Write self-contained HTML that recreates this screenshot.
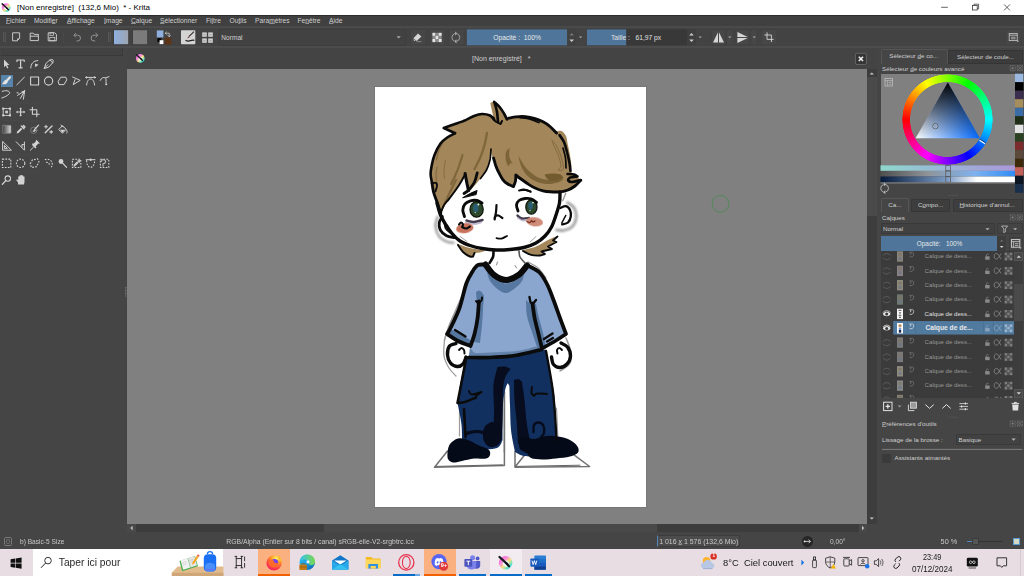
<!DOCTYPE html><html><head><meta charset="utf-8"><title>Krita</title><style>
html,body{margin:0;padding:0;background:#454545;}
body{width:1024px;height:576px;overflow:hidden;position:relative;font-family:"Liberation Sans",sans-serif;}
div,span,svg{position:absolute;box-sizing:border-box;}
span{white-space:pre;line-height:1;}
u{text-decoration:underline;text-decoration-thickness:0.5px;text-underline-offset:0.3px;text-decoration-color:rgba(210,210,210,0.55);}
</style></head><body>
<div style="left:0px;top:0px;width:1024px;height:15.2px;background:#ffffff;"></div>
<span style="left:17px;top:4.3px;font-size:8px;color:#000;">[Non enregistré]  (132,6 Mio)  * - Krita</span>
<svg style="left:0;top:0" width="16" height="16" viewBox="0 0 16 16"><defs><linearGradient id="klt" x1="0" y1="0" x2="1" y2="1"><stop offset="0" stop-color="#ff4fd8"/><stop offset="0.35" stop-color="#f78be0"/><stop offset="0.55" stop-color="#f6e27a"/><stop offset="0.8" stop-color="#48e0d4"/><stop offset="1" stop-color="#38b4ff"/></linearGradient></defs><circle cx="6.2" cy="7.6" r="4.4" fill="url(#klt)"/><circle cx="6.42" cy="8.13" r="1.98" fill="#f2fbfa"/><path d="M2.24 3.86L7.30 8.48" stroke="#1c1c24" stroke-width="1.50" stroke-linecap="round"/><path d="M6.64 7.82L8.40 9.80" stroke="#101018" stroke-width="1.32" stroke-linecap="round"/></svg>
<svg style="left:930px;top:0" width="94" height="16" viewBox="0 0 94 16"><g stroke="#222" stroke-width="0.7" fill="none"><path d="M11.2 7.3h6.6"/><rect x="42.6" y="5.4" width="4.6" height="4.6"/><path d="M44 5.4v-1.2h4.6v4.6h-1.4"/><path d="M74 4.4l6 6M80 4.4l-6 6"/></g></svg>
<div style="left:0px;top:15.2px;width:1024px;height:10.8px;background:#404040;border-top:1px solid #2c2c2c;"></div>
<div style="left:0px;top:26px;width:1024px;height:1.8px;background:#4a4a4a;"></div>
<span style="left:6px;top:18.2px;font-size:6.7px;color:#cfcfcf;"><u>F</u>ichier</span>
<span style="left:34px;top:18.2px;font-size:6.7px;color:#cfcfcf;">Modifi<u>e</u>r</span>
<span style="left:67px;top:18.2px;font-size:6.7px;color:#cfcfcf;"><u>A</u>ffichage</span>
<span style="left:104px;top:18.2px;font-size:6.7px;color:#cfcfcf;"><u>I</u>mage</span>
<span style="left:131px;top:18.2px;font-size:6.7px;color:#cfcfcf;"><u>C</u>alque</span>
<span style="left:160px;top:18.2px;font-size:6.7px;color:#cfcfcf;"><u>S</u>électionner</span>
<span style="left:206px;top:18.2px;font-size:6.7px;color:#cfcfcf;">Fi<u>l</u>tre</span>
<span style="left:229.5px;top:18.2px;font-size:6.7px;color:#cfcfcf;">Ou<u>t</u>ils</span>
<span style="left:255px;top:18.2px;font-size:6.7px;color:#cfcfcf;">Para<u>m</u>ètres</span>
<span style="left:297.5px;top:18.2px;font-size:6.7px;color:#cfcfcf;">Fe<u>n</u>être</span>
<span style="left:329px;top:18.2px;font-size:6.7px;color:#cfcfcf;"><u>A</u>ide</span>
<div style="left:0px;top:27.8px;width:1024px;height:18.4px;background:#434343;"></div>
<div style="left:0px;top:46.2px;width:1024px;height:2.2px;background:#4c4c4c;"></div>
<svg style="left:0;top:0" width="1024" height="576" viewBox="0 0 1024 576"><path d="M3.6 32v10M5.3 32v10" stroke="#606060" stroke-width="0.8"/><path d="M108.6 32v10M110.3 32v10" stroke="#606060" stroke-width="0.8"/><path d="M12.6 32.8h7v5.6l-2.4 2.4h-4.6z" fill="none" stroke="#d6d6d6" stroke-width="0.9"/><path d="M19.6 38.4h-2.4v2.4z" fill="#d6d6d6"/><path d="M30.2 40.6v-7.4h3.2l0.8 1.2h4.2v6.2z" fill="none" stroke="#d6d6d6" stroke-width="0.9"/><path d="M30.2 36.2h8.2" stroke="#d6d6d6" stroke-width="0.9"/><path d="M48.2 32.8h6.6l1.6 1.6v6.4h-8.2z" fill="none" stroke="#d6d6d6" stroke-width="0.9"/><rect x="50" y="32.8" width="3.6" height="2.6" fill="none" stroke="#d6d6d6" stroke-width="0.7"/><rect x="49.8" y="37.4" width="5" height="3.4" fill="none" stroke="#d6d6d6" stroke-width="0.7"/><path d="M63.6 31v12" stroke="#4e4e4e" stroke-width="0.6"/><path d="M74 35.2h3.6a2.9 2.9 0 0 1 0 5.8h-1.2" fill="none" stroke="#9a9a9a" stroke-width="0.9"/><path d="M76 33l-2.2 2.2 2.2 2.2" fill="none" stroke="#9a9a9a" stroke-width="0.9"/><path d="M97.6 35.2h-3.6a2.9 2.9 0 0 0 0 5.8h1.2" fill="none" stroke="#9a9a9a" stroke-width="0.9"/><path d="M95.6 33l2.2 2.2-2.2 2.2" fill="none" stroke="#9a9a9a" stroke-width="0.9"/><defs><linearGradient id="gbtn" x1="0" x2="1"><stop offset="0" stop-color="#8eb0e1"/><stop offset="1" stop-color="#9ea5b1"/></linearGradient></defs><rect x="113.4" y="29.6" width="15.4" height="15.2" fill="#3b3b3b"/><rect x="114" y="30.2" width="14.2" height="14" fill="url(#gbtn)"/><rect x="132.4" y="29.6" width="15.4" height="15.2" fill="#3b3b3b"/><rect x="133" y="30.2" width="14.2" height="14" fill="#7b7b7b"/><rect x="156.8" y="30.4" width="6.6" height="7" fill="#8fb0de"/><rect x="164.8" y="37.8" width="6.6" height="6.6" fill="#5e3418"/><rect x="157.4" y="38.2" width="3.8" height="3.8" fill="#000"/><rect x="159.6" y="40.2" width="3.8" height="3.9" fill="#fff"/><path d="M165.4 33.2h3.8v3.4M166.6 31.8l-1.4 1.4 1.4 1.4M167.8 35.4l1.4 1.4 1.4-1.4" fill="none" stroke="#e0e0e0" stroke-width="0.7"/><rect x="181" y="30.2" width="14.3" height="14" rx="0.8" fill="#d4d4d4"/><path d="M194 31.6l-5.2 5" stroke="#3a2a2a" stroke-width="1.1"/><path d="M188.8 36.4l-1.8 2.2 2.4-1z" fill="#7a1c1c"/><path d="M185.6 40.2c2 1.6 3.4 1 5 0.4 1.4-0.6 2.8-0.6 3.8-0.2" fill="none" stroke="#222" stroke-width="1.2"/><rect x="202.2" y="32.4" width="4.6" height="4.4" fill="#cfcfcf"/><path d="M203.39999999999998 34.8h2.2" stroke="#777" stroke-width="0.6"/><rect x="208.2" y="32.4" width="4.6" height="4.4" fill="#cfcfcf"/><path d="M209.39999999999998 34.8h2.2" stroke="#777" stroke-width="0.6"/><rect x="202.2" y="38.4" width="4.6" height="4.4" fill="#cfcfcf"/><path d="M203.39999999999998 40.8h2.2" stroke="#777" stroke-width="0.6"/><rect x="208.2" y="38.4" width="4.6" height="4.4" fill="#cfcfcf"/><path d="M209.39999999999998 40.8h2.2" stroke="#777" stroke-width="0.6"/><rect x="219.2" y="29.3" width="186.4" height="16" rx="1" fill="#424242" stroke="#3b3b3b" stroke-width="0.6"/><path d="M396.6 36.2h4.2l-2.1 2.2z" fill="#a8a8a8"/><rect x="410.4" y="29.6" width="15.4" height="15.6" rx="1" fill="#474747" stroke="#3f3f3f" stroke-width="0.6"/><rect x="429.6" y="29.6" width="15.4" height="15.6" rx="1" fill="#474747" stroke="#3f3f3f" stroke-width="0.6"/><rect x="448.6" y="29.6" width="15.4" height="15.6" rx="1" fill="#474747" stroke="#3f3f3f" stroke-width="0.6"/><path d="M413.4 38.2l4.6-4.8 3.4 3-4.6 4.6z" fill="#d6d6d6"/><path d="M413.4 38.6l2.4 2.4h-1.8z" fill="#bdbdbd"/><path d="M416.4 41.6h5" stroke="#aaa" stroke-width="0.6"/><rect x="432.4" y="32.8" width="3.1" height="3.1" fill="#e4e4e4"/><rect x="432.4" y="35.9" width="3.1" height="3.1" fill="#8a8a8a"/><rect x="432.4" y="39.0" width="3.1" height="3.1" fill="#e4e4e4"/><rect x="435.5" y="32.8" width="3.1" height="3.1" fill="#8a8a8a"/><rect x="435.5" y="35.9" width="3.1" height="3.1" fill="#e4e4e4"/><rect x="435.5" y="39.0" width="3.1" height="3.1" fill="#8a8a8a"/><rect x="438.6" y="32.8" width="3.1" height="3.1" fill="#e4e4e4"/><rect x="438.6" y="35.9" width="3.1" height="3.1" fill="#8a8a8a"/><rect x="438.6" y="39.0" width="3.1" height="3.1" fill="#e4e4e4"/><path d="M454.47 41.06A3.9 3.9 0 0 1 454.79 33.63M457.13 33.74A3.9 3.9 0 0 1 456.81 41.17" fill="none" stroke="#a9a9a9" stroke-width="0.9"/><path d="M455.06 31.39l2.36 2.15l-2.36 1.93z" fill="#a9a9a9"/><path d="M456.54 43.41l-2.36 -2.15l2.36 -1.93z" fill="#a9a9a9"/><rect x="466.9" y="29.4" width="100.3" height="15.9" fill="#4f769a"/><rect x="567.2" y="29.4" width="9" height="15.9" fill="#414141"/><path d="M569.4 35.4l2.3-2.3 2.3 2.3z" fill="#747474"/><path d="M569.4 39.6l2.3 2.3 2.3-2.3z" fill="#cdcdcd"/><path d="M579 36.6h3.2l-1.6 1.6z" fill="#a8a8a8"/><rect x="587" y="29.4" width="100" height="15.9" fill="#383838"/><rect x="587" y="29.4" width="39.2" height="15.9" fill="#4f769a"/><rect x="687" y="29.4" width="9" height="15.9" fill="#3f3f3f"/><path d="M689.2 35.4l2.3-2.3 2.3 2.3z" fill="#cdcdcd"/><path d="M689.2 39.6l2.3 2.3 2.3-2.3z" fill="#cdcdcd"/><path d="M698.6 36.6h3.2l-1.6 1.6z" fill="#a8a8a8"/><rect x="711.8" y="29.6" width="13.4" height="15.6" rx="1" fill="#474747" stroke="#3f3f3f" stroke-width="0.6"/><rect x="726.6" y="29.6" width="6.4" height="15.6" rx="1" fill="#474747" stroke="#3f3f3f" stroke-width="0.6"/><rect x="736" y="29.6" width="13.4" height="15.6" rx="1" fill="#474747" stroke="#3f3f3f" stroke-width="0.6"/><rect x="751" y="29.6" width="6.4" height="15.6" rx="1" fill="#474747" stroke="#3f3f3f" stroke-width="0.6"/><rect x="761" y="29.6" width="16" height="15.6" rx="1" fill="#474747" stroke="#3f3f3f" stroke-width="0.6"/><path d="M718 32.2v10.4h-5zM719 32.2v10.4h5z" fill="#d6d6d6"/><path d="M737.4 37v-5l10.4 5zM737.4 38v5l10.4-5z" fill="#d6d6d6"/><path d="M728.2 36.6h3.2l-1.6 1.6z" fill="#a8a8a8"/><path d="M752.6 36.6h3.2l-1.6 1.6z" fill="#a8a8a8"/><path d="M767 32.4v7h6.6M764.4 35h7v7" fill="none" stroke="#d6d6d6" stroke-width="0.9"/><rect x="1005.6" y="29.6" width="15" height="15.4" rx="1" fill="#474747" stroke="#3f3f3f" stroke-width="0.6"/><rect x="1009.2" y="33.4" width="8" height="7.2" fill="none" stroke="#c9c9c9" stroke-width="0.8"/><path d="M1009.2 35.2h8" stroke="#c9c9c9" stroke-width="0.8"/><rect x="1011" y="36.6" width="4.6" height="2.8" fill="#8a8a8a"/><path d="M1016.4 40.8h2.6l-1.3 1.2z" fill="#c9c9c9"/></svg>
<span style="left:221.3px;top:34.6px;font-size:6.6px;color:#cfcfcf;">Normal</span>
<span style="left:493.3px;top:34.7px;font-size:6.7px;color:#e8e8e8;">Opacité :  100%</span>
<span style="left:611px;top:34.7px;font-size:6.7px;color:#e0e0e0;">Taille :   61,97 px</span>
<div style="left:0px;top:47.7px;width:127px;height:501px;background:#454545;"></div>
<div style="left:1px;top:48.4px;width:122.4px;height:7.4px;background:#424242;border:1px solid #393939;border-top:none;border-left:none;"></div>
<div style="left:1px;top:74.7px;width:12.2px;height:12.6px;background:#5883ab;"></div>
<svg style="left:0;top:0" width="1024" height="576" viewBox="0 0 1024 576"><path d="M3 72.4h107" stroke="#4c4c4c" stroke-width="0.6"/><path d="M3 103.2h37" stroke="#4c4c4c" stroke-width="0.6"/><path d="M3 120.6h37" stroke="#4c4c4c" stroke-width="0.6"/><path d="M3 137.8h65" stroke="#4c4c4c" stroke-width="0.6"/><path d="M3 155h107" stroke="#4c4c4c" stroke-width="0.6"/><path d="M3 171.8h37" stroke="#4c4c4c" stroke-width="0.6"/><g transform="translate(6.6,64)" fill="none" stroke="#d2d2d2" stroke-width="1" stroke-linecap="round" stroke-linejoin="round"><path d="M-2.6 -4.4v7.6l1.8-1.8 1.4 3 1.2-0.6-1.4-2.8h2.4z" fill="#d2d2d2" stroke="none"/></g><g transform="translate(20.6,64)" fill="none" stroke="#d2d2d2" stroke-width="1" stroke-linecap="round" stroke-linejoin="round"><path d="M-3.6 -2.6v-1.4h7.2v1.4M0 -4v7.6M-1.6 3.8h3.2" stroke-width="1.2"/></g><g transform="translate(34.6,64)" fill="none" stroke="#d2d2d2" stroke-width="1" stroke-linecap="round" stroke-linejoin="round"><path d="M-3.8 4c0-4 2.4-7.4 7-7.4"/><path d="M0.4 -0.6l3.6 1.4-3.4 2.4z" fill="#d2d2d2" stroke="none"/></g><g transform="translate(48.6,64)" fill="none" stroke="#d2d2d2" stroke-width="1" stroke-linecap="round" stroke-linejoin="round"><path d="M-4.2 4.2l1.4-4.6 4-3.6 2.8 2.8-3.6 4zM-4.2 4.2l3.4-3.4M1.2 -4l2.8-0.4 0.6 0.6-0.4 2.8"/></g><g transform="translate(6.6,81)" fill="none" stroke="#d2d2d2" stroke-width="1" stroke-linecap="round" stroke-linejoin="round"><path d="M3.4 -3.8l-3 3.2" stroke-width="2.2" stroke="#e4e4e4"/><path d="M-0.6 -1.2c-2 0.2-2 2.4-4 4.2 2.8 1 5.6-0.4 5.8-2.6z" fill="#e4e4e4" stroke="none"/></g><g transform="translate(20.6,81)" fill="none" stroke="#d2d2d2" stroke-width="1" stroke-linecap="round" stroke-linejoin="round"><path d="M-3.8 3.8l7.6-7.6"/></g><g transform="translate(34.6,81)" fill="none" stroke="#d2d2d2" stroke-width="1" stroke-linecap="round" stroke-linejoin="round"><rect x="-4" y="-4" width="8" height="8" stroke-width="1.1"/></g><g transform="translate(48.6,81)" fill="none" stroke="#d2d2d2" stroke-width="1" stroke-linecap="round" stroke-linejoin="round"><circle r="4.1" stroke-width="1.1"/></g><g transform="translate(62.6,81)" fill="none" stroke="#d2d2d2" stroke-width="1" stroke-linecap="round" stroke-linejoin="round"><path d="M-4.2 0l2.4-3.8h5l1 2.6-2.8 4.8h-4.6z"/></g><g transform="translate(76.6,81)" fill="none" stroke="#d2d2d2" stroke-width="1" stroke-linecap="round" stroke-linejoin="round"><path d="M-4 -4l7.6 3.4-7 4.2 1.8-5"/></g><g transform="translate(90.6,81)" fill="none" stroke="#d2d2d2" stroke-width="1" stroke-linecap="round" stroke-linejoin="round"><path d="M-4 4c0.4-4 2-6 4-6s3.6 2 4 6M-4.2 -3.6h8.4"/><circle cx="-4.2" cy="-3.6" r="0.7" fill="#d2d2d2"/><circle cx="4.2" cy="-3.6" r="0.7" fill="#d2d2d2"/></g><g transform="translate(104.6,81)" fill="none" stroke="#d2d2d2" stroke-width="1" stroke-linecap="round" stroke-linejoin="round"><path d="M-4.4 -0.6c1-2.6 3.4-3.4 5-2.6 1.4 0.8 0.6 3 0.8 5.2M1.2 -3.4l3.2-0.8"/><circle cx="1.6" cy="3.2" r="1" fill="#d2d2d2" stroke="none"/></g><g transform="translate(6.6,94.8)" fill="none" stroke="#d2d2d2" stroke-width="1" stroke-linecap="round" stroke-linejoin="round"><path d="M-4.4 -3.4c3.4-1.4 7-0.6 7.4 1 0.4 2-4 4.4-7.8 5.6"/></g><g transform="translate(20.6,94.8)" fill="none" stroke="#d2d2d2" stroke-width="1" stroke-linecap="round" stroke-linejoin="round"><path d="M4 -4l-7 4.6M4 -4l-4.2 7.6M4 -4l-1.2 8.4M-3.6 -2l1.4 0.2"/><path d="M4.2 -4.2l-3.4 0.8 2.6 2.6z" fill="#d2d2d2" stroke="none"/></g><g transform="translate(6.6,112)" fill="none" stroke="#d2d2d2" stroke-width="1" stroke-linecap="round" stroke-linejoin="round"><rect x="-3.4" y="-3.4" width="6.8" height="6.8" stroke-dasharray="1.4 0.9"/><rect x="-1.3" y="-1.3" width="2.6" height="2.6" fill="#d2d2d2" stroke="none"/><g fill="#d2d2d2" stroke="none"><rect x="-4.4" y="-4.4" width="2" height="2"/><rect x="2.4" y="-4.4" width="2" height="2"/><rect x="-4.4" y="2.4" width="2" height="2"/><rect x="2.4" y="2.4" width="2" height="2"/></g></g><g transform="translate(20.6,112)" fill="none" stroke="#d2d2d2" stroke-width="1" stroke-linecap="round" stroke-linejoin="round"><path d="M0 -3.4v6.8M-3.4 0h6.8" stroke-width="1.2"/><path d="M0 -4.6l1.4 1.6h-2.8zM0 4.6l1.4-1.6h-2.8zM-4.6 0l1.6 1.4v-2.8zM4.6 0l-1.6 1.4v-2.8z" fill="#d2d2d2" stroke="none"/></g><g transform="translate(34.6,112)" fill="none" stroke="#d2d2d2" stroke-width="1" stroke-linecap="round" stroke-linejoin="round"><path d="M-2.2 -4.6v6.8h6.8M-4.6 -2.2h6.8v6.8" stroke-width="1.1"/></g><defs><linearGradient id="tg" x1="0" x2="1"><stop offset="0" stop-color="#3c3c3c"/><stop offset="1" stop-color="#d8d8d8"/></linearGradient></defs><g transform="translate(6.6,129.3)" fill="none" stroke="#d2d2d2" stroke-width="1" stroke-linecap="round" stroke-linejoin="round"><rect x="-4.2" y="-4" width="8.6" height="8" rx="0.8" fill="url(#tg)" stroke="#8a8a8a" stroke-width="0.6"/></g><g transform="translate(20.6,129.3)" fill="none" stroke="#d2d2d2" stroke-width="1" stroke-linecap="round" stroke-linejoin="round"><path d="M-4 4.2l0.6-2 3.8-3.8 1.4 1.4-3.8 3.8z" fill="#d2d2d2" stroke="none"/><path d="M0.6 -3.4l2.8 2.8M1.6 -2.2l1.4-1.6 1.4 1.4-1.6 1.4" stroke-width="1.3"/></g><g transform="translate(34.6,129.3)" fill="none" stroke="#d2d2d2" stroke-width="1" stroke-linecap="round" stroke-linejoin="round"><circle cx="-0.8" cy="1" r="3.2" stroke="#8e8e8e" stroke-width="0.7"/><path d="M4 -4.2l-3.6 3.8" stroke-width="1.3"/><path d="M0.2 -0.2c-1.2 0.2-1 1.6-2.4 2.6 1.8 0.4 3.4-0.2 3.4-1.8z" fill="#d2d2d2" stroke="none"/></g><g transform="translate(48.6,129.3)" fill="none" stroke="#d2d2d2" stroke-width="1" stroke-linecap="round" stroke-linejoin="round"><path d="M-3.4 3.4l6.8-6.8" stroke-width="1.4"/><path d="M-2.6 -4v2.8M-4 -2.6h2.8M2.6 1.2v2.8M1.2 2.6h2.8" stroke-width="1.1"/></g><g transform="translate(62.6,129.3)" fill="none" stroke="#d2d2d2" stroke-width="1" stroke-linecap="round" stroke-linejoin="round"><path d="M-3.6 0l3.4-3.6 3.8 3.6-3.4 3.6z" stroke-width="1"/><path d="M-2.4 0.4h5l-2.8 3z" fill="#d2d2d2" stroke="none"/><path d="M-1.6 -4.4l2 2M3.8 0.6c1 1.4 1 2.4 0.4 3.2" stroke-width="0.9"/></g><g transform="translate(6.6,146)" fill="none" stroke="#d2d2d2" stroke-width="1" stroke-linecap="round" stroke-linejoin="round"><path d="M-4 -4.2v8.4h8.4zM-2.2 -0.2v2.6h2.6z" stroke-width="1"/></g><g transform="translate(20.6,146)" fill="none" stroke="#d2d2d2" stroke-width="1" stroke-linecap="round" stroke-linejoin="round"><path d="M-4.4 -4.2l8.2 8.4v-8.2M1.4 1v-2.6l2.2 0.4" stroke-width="1"/></g><g transform="translate(34.6,146)" fill="none" stroke="#d2d2d2" stroke-width="1" stroke-linecap="round" stroke-linejoin="round"><path d="M-4.2 4.2l3-3" stroke-width="1"/><path d="M-2.4 -0.8l3.2 3.2 1-1-0.6-1.2 2.6-2.6 0.8 0.2 0.6-0.6-3.4-3.4-0.6 0.6 0.2 0.8-2.6 2.6-1.2-0.6z" fill="#d2d2d2" stroke="none"/></g><g transform="translate(6.6,163.3)" fill="none" stroke="#d2d2d2" stroke-width="1" stroke-linecap="round" stroke-linejoin="round"><rect x="-4.2" y="-4.2" width="8.4" height="8.4" stroke-dasharray="1.7 1.3" stroke-linecap="butt" stroke-width="1.1"/></g><g transform="translate(20.6,163.3)" fill="none" stroke="#d2d2d2" stroke-width="1" stroke-linecap="round" stroke-linejoin="round"><circle r="4.2" stroke-dasharray="1.7 1.3" stroke-linecap="butt" stroke-width="1.1"/></g><g transform="translate(34.6,163.3)" fill="none" stroke="#d2d2d2" stroke-width="1" stroke-linecap="round" stroke-linejoin="round"><path d="M-4.4 0.4l2.2-3.8 5.2-1 1.4 2.8-2.6 5-5 0.8z" stroke-dasharray="1.7 1.3" stroke-linecap="butt" stroke-width="1.1"/></g><g transform="translate(48.6,163.3)" fill="none" stroke="#d2d2d2" stroke-width="1" stroke-linecap="round" stroke-linejoin="round"><path d="M-3.8 -3.6c3.4-1.4 7 0.6 7.4 3.6 0.2 1.6-0.2 2.8-1 3.8M-2.6 -1c2-0.4 3.6 0.8 3.4 3.6" stroke-dasharray="1.7 1.3" stroke-linecap="butt" stroke-width="1.1"/></g><g transform="translate(62.6,163.3)" fill="none" stroke="#d2d2d2" stroke-width="1" stroke-linecap="round" stroke-linejoin="round"><circle cx="-1.6" cy="-1.8" r="2.4" fill="#d2d2d2" stroke="none"/><path d="M0 -0.2l4 4.2" stroke-width="1.2"/></g><g transform="translate(76.6,163.3)" fill="none" stroke="#d2d2d2" stroke-width="1" stroke-linecap="round" stroke-linejoin="round"><rect x="-4.2" y="-4" width="8.4" height="8.2" stroke-dasharray="1.7 1.3" stroke-linecap="butt" stroke-width="1.1"/><path d="M-2.6 2.6l0.4-1.4 2.8-2.8 1 1-2.8 2.8zM1.2 -2.6l1.6 1.6M1.8 -2.4l1-1 1 1-1 1" stroke-width="0.9" fill="#d2d2d2"/></g><g transform="translate(90.6,163.3)" fill="none" stroke="#d2d2d2" stroke-width="1" stroke-linecap="round" stroke-linejoin="round"><path d="M-4 -3c0 4 1.4 7 4 7s4-3 4-7" stroke-dasharray="1.7 1.3" stroke-linecap="butt" stroke-width="1.1"/><path d="M-4.4 -3.6h8.8" stroke-width="1"/><circle cx="0" cy="-3.6" r="0.8" fill="#d2d2d2"/></g><g transform="translate(104.6,163.3)" fill="none" stroke="#d2d2d2" stroke-width="1" stroke-linecap="round" stroke-linejoin="round"><rect x="-4.2" y="-4" width="8.4" height="8.2" stroke-dasharray="1.7 1.3" stroke-linecap="butt" stroke-width="1.1"/><path d="M-1.6 3v-2.6c3 0 3.6-3.6 0.8-4-1.4-0.2-2.4 0.6-2.6 1.8" stroke-width="1.1" stroke="#bdbdbd"/></g><g transform="translate(6.6,180)" fill="none" stroke="#d2d2d2" stroke-width="1" stroke-linecap="round" stroke-linejoin="round"><circle cx="1.2" cy="-1.4" r="2.7" stroke-width="1.1"/><path d="M-0.8 0.6l-3.4 3.6" stroke-width="1.3"/></g><g transform="translate(20.6,180)" fill="none" stroke="#d2d2d2" stroke-width="1" stroke-linecap="round" stroke-linejoin="round"><path d="M-2.6 4.4v-2l-1.8-2.4 0.8-0.8 1.2 1v-3.8h1.2v-1h1.3v-0.4h1.3v0.6h1.3v1h1.2v5.4l-0.6 2.4z" fill="#d2d2d2" stroke="none"/></g></svg>
<div style="left:127px;top:47.7px;width:750px;height:21px;background:#444444;"></div>
<span style="left:472px;top:55.4px;font-size:7.0px;color:#cfcfcf;">[Non enregistré]   *</span>
<div style="left:127px;top:68.7px;width:740px;height:455px;background:#808080;"></div>
<div style="left:375.2px;top:87.0px;width:271.2px;height:420.0px;background:#ffffff;box-shadow:0 0 0 0.9px #767676;"></div>
<div style="left:867px;top:68.7px;width:9.5px;height:455px;background:#3d3d3d;"></div>
<div style="left:867px;top:77px;width:9.5px;height:139px;background:#4a4a4a;"></div>
<div style="left:127px;top:523.6px;width:740px;height:8.8px;background:#3c3c3c;"></div>
<div style="left:324px;top:523.6px;width:333px;height:8.8px;background:#494949;"></div>
<div style="left:127px;top:523.6px;width:8.6px;height:8.8px;background:#494949;"></div>
<div style="left:859px;top:523.6px;width:8px;height:8.8px;background:#494949;"></div>
<svg style="left:0;top:0" width="1024" height="576" viewBox="0 0 1024 576"><defs><filter id="bl" x="-20%" y="-20%" width="140%" height="140%"><feGaussianBlur stdDeviation="0.9"/></filter><filter id="bl2" x="-20%" y="-20%" width="140%" height="140%"><feGaussianBlur stdDeviation="0.35"/></filter><clipPath id="pg"><rect x="375.2" y="87" width="271.2" height="420"/></clipPath></defs><g clip-path="url(#pg)"><g filter="url(#bl2)" opacity="0.85"><path d="M447.5 451L434.5 467.300L504.4 465.600L504.4 392" fill="none" stroke="#585858" stroke-width="1.5" stroke-linecap="round" stroke-linejoin="round" /><path d="M515 451.500L515 467.300L589.6 466.500L573 454.200M515 467L527 452" fill="none" stroke="#585858" stroke-width="1.5" stroke-linecap="round" stroke-linejoin="round" /><path d="M436 466.400L503 464.8" fill="none" stroke="#4a4a4a" stroke-width="1.0" stroke-linecap="round" stroke-linejoin="round" /><path d="M516 466.400L580 465.2" fill="none" stroke="#4a4a4a" stroke-width="1.0" stroke-linecap="round" stroke-linejoin="round" /><path d="M437.6 217.0C437.3 218.6 435.3 223.2 435.6 226.5C435.9 229.8 437.3 234.0 439.2 236.5C441.1 239.0 444.4 240.5 446.8 241.6C449.2 242.7 452.4 242.6 453.5 242.8" fill="none" stroke="#7c7c7c" stroke-width="2.6" stroke-linecap="round" stroke-linejoin="round" filter="url(#bl)" opacity="0.85"/><path d="M567.4 202.7C568.3 203.3 571.6 204.9 573.0 206.5C574.4 208.1 575.3 209.8 575.8 212.0C576.3 214.2 576.6 217.0 576.0 219.4C575.4 221.8 574.2 224.9 572.2 226.7C570.2 228.5 566.4 229.9 563.8 230.4C561.2 230.9 557.7 229.9 556.5 229.8" fill="none" stroke="#7c7c7c" stroke-width="2.8" stroke-linecap="round" stroke-linejoin="round" filter="url(#bl)" opacity="0.85"/><path d="M562.7 200.6C563.0 200.0 563.8 198.2 564.3 197.0C564.8 195.8 565.5 193.9 565.8 193.3" fill="none" stroke="#8a8a8a" stroke-width="1.4" stroke-linecap="round" stroke-linejoin="round" /><path d="M462.0 296.0C460.8 298.7 457.2 307.0 455.0 312.0C452.8 317.0 450.8 321.3 449.0 326.0C447.2 330.7 445.2 337.7 444.5 340.0" fill="none" stroke="#8a8a8a" stroke-width="1.6" stroke-linecap="round" stroke-linejoin="round" /><path d="M444.5 340.0C444.4 342.7 443.2 351.3 444.0 356.0C444.8 360.7 447.0 364.7 449.0 368.0C451.0 371.3 454.8 374.7 456.0 376.0" fill="none" stroke="#8a8a8a" stroke-width="1.3" stroke-linecap="round" stroke-linejoin="round" /><path d="M528.0 262.0C529.7 263.0 535.0 265.3 538.0 268.0C541.0 270.7 544.7 276.3 546.0 278.0" fill="none" stroke="#8a8a8a" stroke-width="1.3" stroke-linecap="round" stroke-linejoin="round" /><path d="M566.0 338.0C566.8 340.3 570.4 347.7 571.0 352.0C571.6 356.3 571.3 360.8 569.5 364.0C567.7 367.2 561.6 369.8 560.0 371.0" fill="none" stroke="#8a8a8a" stroke-width="1.5" stroke-linecap="round" stroke-linejoin="round" /><path d="M504.4 388L504.4 452" fill="none" stroke="#5a5a5a" stroke-width="1.4" stroke-linecap="round" stroke-linejoin="round" /><path d="M459.5 408L459.5 436M556.5 408L558 440" fill="none" stroke="#8a8a8a" stroke-width="1.2" stroke-linecap="round" stroke-linejoin="round" /></g><path d="M456.5 243.5C457.4 244.8 459.9 249.3 462.0 251.5C464.1 253.7 467.2 255.7 469.0 256.5C470.8 257.3 472.3 256.5 473.0 256.5L474.5 253.0C475.4 252.9 478.1 252.9 480.0 252.5C481.9 252.1 485.0 251.1 486.0 250.8C483.3 250.3 474.9 249.2 470.0 248.0C465.1 246.8 458.8 244.2 456.5 243.5Z" fill="#a3875a" stroke="none" stroke-width="0" stroke-linecap="round" stroke-linejoin="round" /><path d="M522.0 250.5C523.3 251.2 527.0 253.7 530.0 254.5C533.0 255.3 537.5 255.6 540.0 255.5C542.5 255.4 544.2 254.2 545.0 254.0L541.5 251.5L552.0 249.0L547.5 246.5L556.5 242.0L553.0 240.5L557.5 236.0C555.9 236.7 551.6 238.2 548.0 240.0C544.4 241.8 540.3 244.8 536.0 246.5C531.7 248.2 524.3 249.8 522.0 250.5Z" fill="#a3875a" stroke="none" stroke-width="0" stroke-linecap="round" stroke-linejoin="round" /><path d="M466.5 356.5C470.4 356.7 481.9 357.7 490.0 357.5C498.1 357.3 505.8 356.8 515.0 355.5C524.2 354.2 540.4 350.5 545.5 349.5C546.1 352.6 547.7 361.2 549.0 368.0C550.3 374.8 552.4 383.0 553.5 390.0C554.6 397.0 555.0 402.3 555.5 410.0C556.0 417.7 556.3 431.7 556.5 436.0C555.9 438.0 555.8 444.8 553.0 448.0C550.2 451.2 544.8 454.2 540.0 455.5C535.2 456.8 528.2 456.6 524.0 456.0C519.8 455.4 516.5 452.7 515.0 452.0C514.3 448.3 511.8 437.8 511.0 430.0C510.2 422.2 510.3 412.3 510.0 405.0C509.7 397.7 509.5 389.2 509.4 386.0C509.1 385.6 508.2 382.8 507.5 383.5C506.8 384.2 505.4 388.9 505.0 390.0C504.7 392.5 503.4 396.7 503.0 405.0C502.6 413.3 502.7 434.2 502.6 440.0C501.7 441.3 500.8 446.5 497.0 448.0C493.2 449.5 485.8 449.7 480.0 449.0C474.2 448.3 465.0 444.8 462.0 444.0C461.9 440.8 462.2 431.8 461.5 425.0C460.8 418.2 458.2 406.7 457.5 403.0C458.1 399.2 459.5 387.8 461.0 380.0C462.5 372.2 465.6 360.4 466.5 356.5Z" fill="#12305f" stroke="none" stroke-width="0" stroke-linecap="round" stroke-linejoin="round" /><path d="M497.5 367.0C498.8 366.9 502.8 366.2 505.0 366.5C507.2 366.8 509.6 368.6 510.5 369.0C509.6 370.5 506.2 374.2 505.0 378.0C503.8 381.8 503.4 385.0 503.0 392.0C502.6 399.0 502.8 412.0 502.5 420.0C502.2 428.0 501.7 436.7 501.5 440.0C500.8 440.2 498.3 441.2 497.0 441.0C495.7 440.8 494.1 439.3 493.5 439.0C493.6 434.2 494.0 419.0 494.0 410.0C494.0 401.0 492.9 392.2 493.5 385.0C494.1 377.8 496.8 370.0 497.5 367.0Z" fill="#070d1f" stroke="none" stroke-width="0" stroke-linecap="round" stroke-linejoin="round" /><path d="M514.0 380.0C514.8 379.8 517.2 378.7 518.5 379.0C519.8 379.3 521.4 381.5 522.0 382.0C522.4 385.0 523.7 392.8 524.5 400.0C525.3 407.2 525.9 417.5 527.0 425.0C528.1 432.5 530.3 441.7 531.0 445.0C529.8 445.2 526.2 446.2 524.0 446.0C521.8 445.8 519.0 444.3 518.0 444.0C517.8 440.0 517.1 427.3 516.5 420.0C515.9 412.7 514.9 406.7 514.5 400.0C514.1 393.3 514.1 383.3 514.0 380.0Z" fill="#070d1f" stroke="none" stroke-width="0" stroke-linecap="round" stroke-linejoin="round" /><path d="M447.5 452.0C447.9 450.7 448.2 446.2 450.0 444.0C451.8 441.8 455.0 439.2 458.0 438.5C461.0 437.8 464.7 438.9 468.0 440.0C471.3 441.1 474.6 443.4 478.0 445.0C481.4 446.6 486.5 447.8 488.5 449.5C490.5 451.2 490.4 453.5 490.0 455.0C489.6 456.5 488.7 457.9 486.0 458.5C483.3 459.1 478.0 458.1 474.0 458.5C470.0 458.9 465.5 460.3 462.0 461.0C458.5 461.7 455.3 462.8 453.0 462.5C450.7 462.2 448.9 460.8 448.0 459.0C447.1 457.2 447.6 453.2 447.5 452.0Z" fill="#050a18" stroke="none" stroke-width="0" stroke-linecap="round" stroke-linejoin="round" /><path d="M519.0 441.0C519.8 440.2 521.5 436.8 524.0 436.5C526.5 436.2 530.3 439.1 534.0 439.0C537.7 438.9 542.0 436.4 546.0 436.0C550.0 435.6 554.0 435.8 558.0 436.5C562.0 437.2 566.8 438.3 570.0 440.0C573.2 441.7 576.2 444.4 577.5 446.5C578.8 448.6 579.2 450.8 578.0 452.5C576.8 454.2 573.7 455.5 570.0 456.5C566.3 457.5 560.7 458.0 556.0 458.5C551.3 459.0 546.2 459.6 542.0 459.5C537.8 459.4 533.5 459.0 531.0 458.0C528.5 457.0 528.8 455.0 527.0 453.5C525.2 452.0 521.3 451.1 520.0 449.0C518.7 446.9 519.2 442.3 519.0 441.0Z" fill="#050a18" stroke="none" stroke-width="0" stroke-linecap="round" stroke-linejoin="round" /><path d="M485.0 426.0C486.2 425.3 489.5 422.2 492.0 422.0C494.5 421.8 498.3 423.0 500.0 425.0C501.7 427.0 502.2 430.8 502.0 434.0C501.8 437.2 501.0 441.8 499.0 444.0C497.0 446.2 492.5 447.5 490.0 447.0C487.5 446.5 485.2 443.5 484.0 441.0C482.8 438.5 482.8 434.5 483.0 432.0C483.2 429.5 484.7 427.0 485.0 426.0Z" fill="#060c1c" stroke="none" stroke-width="0" stroke-linecap="round" stroke-linejoin="round" /><path d="M466.0 433.5C468.0 433.2 474.0 431.1 478.0 431.5C482.0 431.9 487.0 433.9 490.0 436.0C493.0 438.1 495.0 442.7 496.0 444.0" fill="none" stroke="#060c1c" stroke-width="3.2" stroke-linecap="round" stroke-linejoin="round" /><path d="M533.5 432.0C533.6 430.8 533.1 426.6 534.0 425.0C534.9 423.4 537.4 422.3 539.0 422.5C540.6 422.7 542.7 424.2 543.5 426.0C544.3 427.8 544.4 431.2 544.0 433.0C543.6 434.8 541.5 436.3 541.0 437.0" fill="none" stroke="#060c1c" stroke-width="2.4" stroke-linecap="round" stroke-linejoin="round" /><path d="M484.0 264.5C483.0 264.6 479.7 264.2 478.0 265.0C476.3 265.8 474.7 268.3 474.0 269.0C472.8 271.3 468.9 276.5 466.5 283.0C464.1 289.5 462.2 300.5 459.5 308.0C456.8 315.5 452.7 323.7 450.5 328.0C448.3 332.3 447.2 333.0 446.5 334.0C448.4 335.2 454.0 339.0 458.0 341.0C462.0 343.0 468.4 345.2 470.5 346.0C470.4 347.0 470.3 350.1 470.0 352.0C469.7 353.9 468.8 356.6 468.5 357.5C472.1 357.5 482.2 357.8 490.0 357.5C497.8 357.2 506.4 356.9 515.0 355.5C523.6 354.1 537.1 350.1 541.5 349.0L543.5 347.0C545.4 346.2 551.2 344.2 555.0 342.0C558.8 339.8 564.2 335.3 566.0 334.0C565.0 331.3 562.1 323.7 560.0 318.0C557.9 312.3 555.6 305.5 553.5 300.0C551.4 294.5 549.8 289.6 547.5 285.0C545.2 280.4 542.8 275.8 539.5 272.5C536.2 269.2 529.5 266.7 527.5 265.5C526.1 267.2 522.6 273.0 519.0 275.5C515.4 278.0 510.2 280.5 506.0 280.5C501.8 280.5 497.2 278.2 493.5 275.5C489.8 272.8 485.6 266.3 484.0 264.5Z" fill="#8ba6ce" stroke="none" stroke-width="0" stroke-linecap="round" stroke-linejoin="round" /><path d="M487.0 272.0C488.2 273.2 490.8 277.1 494.0 279.0C497.2 280.9 502.0 283.5 506.0 283.5C510.0 283.5 514.9 281.1 518.0 279.0C521.1 276.9 523.4 272.3 524.5 271.0C524.1 272.7 523.8 278.0 522.0 281.0C520.2 284.0 516.7 287.0 514.0 289.0C511.3 291.0 508.7 292.9 506.0 293.0C503.3 293.1 500.7 291.5 498.0 289.5C495.3 287.5 491.8 283.9 490.0 281.0C488.2 278.1 487.5 273.5 487.0 272.0Z" fill="#56779f" stroke="none" stroke-width="0" stroke-linecap="round" stroke-linejoin="round" /><path d="M476.0 292.0C476.5 291.8 478.0 290.4 479.0 290.5C480.0 290.6 481.2 291.6 482.0 292.5C482.8 293.4 483.7 295.4 484.0 296.0C483.8 298.3 483.3 305.2 483.0 310.0C482.7 314.8 482.5 319.5 482.0 325.0C481.5 330.5 480.3 340.0 480.0 343.0L474.0 342.0C474.6 338.3 477.0 326.2 477.5 320.0C478.0 313.8 477.2 309.7 477.0 305.0C476.8 300.3 476.2 294.2 476.0 292.0Z" fill="#56779f" stroke="none" stroke-width="0" stroke-linecap="round" stroke-linejoin="round" /><path d="M526.0 300.0C526.7 300.5 528.3 302.3 530.0 303.0C531.7 303.7 535.0 303.8 536.0 304.0C536.5 306.3 537.8 313.2 539.0 318.0C540.2 322.8 541.9 328.5 543.0 333.0C544.1 337.5 545.1 343.0 545.5 345.0L538.0 349.5C537.0 346.6 533.8 337.6 532.0 332.0C530.2 326.4 528.0 321.3 527.0 316.0C526.0 310.7 526.2 302.7 526.0 300.0Z" fill="#56779f" stroke="none" stroke-width="0" stroke-linecap="round" stroke-linejoin="round" /><path d="M446.5 334.0C447.4 333.3 447.8 328.8 452.0 330.0C456.2 331.2 468.7 339.2 472.0 341.0L470.5 346.0C468.4 345.2 462.0 343.0 458.0 341.0C454.0 339.0 448.4 335.2 446.5 334.0Z" fill="#56779f" stroke="none" stroke-width="0" stroke-linecap="round" stroke-linejoin="round" /><path d="M470.0 347.0C470.7 347.9 472.3 351.5 474.0 352.5C475.7 353.5 479.0 352.9 480.0 353.0C483.3 352.8 493.3 352.4 500.0 352.0C506.7 351.6 514.0 351.4 520.0 350.5C526.0 349.6 533.3 347.2 536.0 346.5L541.0 349.0C536.7 350.0 523.5 353.7 515.0 355.0C506.5 356.3 497.8 356.7 490.0 357.0C482.2 357.3 472.1 357.0 468.5 357.0L470.0 347.0Z" fill="#56779f" stroke="none" stroke-width="0" stroke-linecap="round" stroke-linejoin="round" opacity="0.75"/><path d="M485.5 264.5C486.9 266.2 490.6 272.4 494.0 275.0C497.4 277.6 501.9 280.0 506.0 280.0C510.1 280.0 515.0 277.4 518.5 275.0C522.0 272.6 525.6 267.1 527.0 265.5" fill="none" stroke="#0b0b0b" stroke-width="5.98" stroke-linecap="round" stroke-linejoin="round" /><path d="M493.5 251.0C493.4 252.0 493.7 255.0 493.0 257.0C492.3 259.0 490.1 262.0 489.5 263.0" fill="none" stroke="#0b0b0b" stroke-width="2.6" stroke-linecap="round" stroke-linejoin="round" /><path d="M519.0 251.0C519.2 252.0 519.0 255.0 520.0 257.0C521.0 259.0 524.2 262.0 525.0 263.0" fill="none" stroke="#555" stroke-width="1.6" stroke-linecap="round" stroke-linejoin="round" /><path d="M497.5 262l-1 3M515 265.500l1.5 2.5" fill="none" stroke="#777" stroke-width="0.9" stroke-linecap="round" stroke-linejoin="round" /><path d="M456.0 343.5C454.9 343.9 450.9 344.1 449.5 346.0C448.1 347.9 447.3 352.2 447.5 355.0C447.7 357.8 448.9 361.1 450.5 363.0C452.1 364.9 454.9 366.3 457.0 366.5C459.1 366.7 461.5 365.6 463.0 364.0C464.5 362.4 465.5 358.2 466.0 357.0" fill="#fff" stroke="#0b0b0b" stroke-width="3.38" stroke-linecap="round" stroke-linejoin="round" /><path d="M561.0 343.0C562.1 343.7 565.9 344.8 567.5 347.0C569.1 349.2 570.6 353.2 570.5 356.0C570.4 358.8 568.8 362.1 567.0 364.0C565.2 365.9 562.2 367.4 560.0 367.5C557.8 367.6 554.9 366.2 553.5 364.5C552.1 362.8 551.8 358.2 551.5 357.0" fill="#fff" stroke="#0b0b0b" stroke-width="3.38" stroke-linecap="round" stroke-linejoin="round" /><path d="M459.0 350.0C459.4 349.7 460.7 348.0 461.5 348.0C462.3 348.0 463.5 349.1 464.0 350.0C464.5 350.9 464.4 352.9 464.5 353.5" fill="none" stroke="#0b0b0b" stroke-width="1.95" stroke-linecap="round" stroke-linejoin="round" /><path d="M557.5 353.5C557.4 352.9 556.7 350.9 557.0 350.0C557.3 349.1 558.7 348.0 559.5 348.0C560.3 348.0 561.6 349.7 562.0 350.0" fill="none" stroke="#0b0b0b" stroke-width="1.95" stroke-linecap="round" stroke-linejoin="round" /><path d="M484.0 264.5C483.0 264.6 479.7 264.2 478.0 265.0C476.3 265.8 474.7 268.3 474.0 269.0C472.8 271.3 468.9 276.5 466.5 283.0C464.1 289.5 462.2 300.5 459.5 308.0C456.8 315.5 452.6 323.7 450.5 328.0C448.4 332.3 447.6 333.0 447.0 334.0C448.8 335.2 454.1 339.0 458.0 341.0C461.9 343.0 468.4 345.2 470.5 346.0C471.2 344.0 473.3 338.7 474.5 334.0C475.7 329.3 476.9 323.4 477.6 318.0C478.3 312.6 478.7 304.2 478.9 301.5" fill="none" stroke="#0b0b0b" stroke-width="3.77" stroke-linecap="round" stroke-linejoin="round" /><path d="M527.5 265.5C529.5 266.7 536.2 269.2 539.5 272.5C542.8 275.8 545.2 280.4 547.5 285.0C549.8 289.6 551.4 294.5 553.5 300.0C555.6 305.5 557.9 312.3 560.0 318.0C562.1 323.7 565.0 331.3 566.0 334.0C564.3 335.1 560.0 338.1 556.0 340.5C552.0 342.9 544.3 347.2 542.0 348.5C541.4 346.1 539.7 339.1 538.5 334.0C537.3 328.9 535.6 323.1 534.6 318.0C533.6 312.9 532.9 305.9 532.5 303.5" fill="none" stroke="#0b0b0b" stroke-width="3.77" stroke-linecap="round" stroke-linejoin="round" /><path d="M468.5 357.5C472.1 357.5 482.2 357.8 490.0 357.5C497.8 357.2 506.4 356.8 515.0 355.5C523.6 354.2 537.1 350.5 541.5 349.5" fill="none" stroke="#0b0b0b" stroke-width="3.64" stroke-linecap="round" stroke-linejoin="round" /><path d="M476.0 301.0C476.4 301.3 477.6 303.1 478.5 303.0C479.4 302.9 480.9 301.4 481.5 300.5C482.1 299.6 481.9 298.0 482.0 297.5" fill="none" stroke="#0b0b0b" stroke-width="2.08" stroke-linecap="round" stroke-linejoin="round" /><path d="M529.5 297.0C529.7 297.8 529.9 300.9 530.5 302.0C531.1 303.1 532.1 303.8 533.0 303.5C533.9 303.2 535.5 300.6 536.0 300.0" fill="none" stroke="#0b0b0b" stroke-width="2.34" stroke-linecap="round" stroke-linejoin="round" /><path d="M455 330l10.5 6.5" fill="none" stroke="#0b0b0b" stroke-width="2.34" stroke-linecap="round" stroke-linejoin="round" /><path d="M544 339l8.5-5.500M547 341.500l6-3.5" fill="none" stroke="#0b0b0b" stroke-width="2.34" stroke-linecap="round" stroke-linejoin="round" /><path d="M466.0 359.0C465.3 362.5 463.4 372.7 462.0 380.0C460.6 387.3 458.2 399.2 457.5 403.0C458.8 402.8 461.9 402.9 465.0 402.0C468.1 401.1 474.2 398.2 476.0 397.5" fill="none" stroke="#0b0b0b" stroke-width="2.6" stroke-linecap="round" stroke-linejoin="round" /><path d="M546.0 351.0C546.6 354.2 548.3 363.2 549.5 370.0C550.7 376.8 552.1 384.5 553.0 392.0C553.9 399.5 554.4 407.0 555.0 415.0C555.6 423.0 556.2 435.8 556.5 440.0" fill="none" stroke="#0b0b0b" stroke-width="2.34" stroke-linecap="round" stroke-linejoin="round" /><path d="M469.0 391.0C469.4 391.6 469.4 394.3 471.5 394.5C473.6 394.7 479.8 392.4 481.5 392.0L476.0 396.0" fill="none" stroke="#0b0b0b" stroke-width="1.95" stroke-linecap="round" stroke-linejoin="round" /><path d="M532.0 387.0C531.9 388.0 531.2 391.5 531.5 393.0C531.8 394.5 533.6 395.5 534.0 396.0C534.5 395.6 534.8 393.8 537.0 393.5C539.2 393.2 545.3 393.9 547.0 394.0" fill="none" stroke="#0b0b0b" stroke-width="1.95" stroke-linecap="round" stroke-linejoin="round" /><path d="M464 409L465.5 437" fill="none" stroke="#0b0b0b" stroke-width="2.6" stroke-linecap="round" stroke-linejoin="round" /><path d="M493.8 101.3C494.7 102.2 497.4 105.0 499.0 107.0C500.6 109.0 502.0 111.6 503.5 113.5C505.0 115.4 507.2 117.6 507.9 118.4C509.2 118.2 513.1 117.3 516.0 117.0C518.9 116.7 522.3 116.3 525.5 116.6C528.7 116.8 532.1 117.7 535.0 118.5C537.9 119.3 540.3 120.1 543.0 121.5C545.7 122.9 548.8 125.3 551.0 127.0C553.2 128.7 555.6 130.8 556.5 131.5C557.3 131.4 559.9 130.2 561.5 131.0C563.1 131.8 565.0 134.0 566.0 136.0C567.0 138.0 567.2 141.8 567.5 143.0C567.9 145.0 569.4 151.2 570.0 155.0C570.6 158.8 571.3 163.1 571.4 165.8C571.5 168.6 570.6 170.6 570.5 171.5C571.3 172.2 573.8 174.1 575.5 175.5C577.2 176.9 579.9 179.4 580.8 180.2C579.8 181.2 576.8 184.8 574.7 186.4C572.6 188.0 570.4 189.1 568.0 190.0C565.6 190.9 563.6 191.5 560.6 191.8C557.6 192.1 552.9 191.8 550.0 191.6C547.1 191.4 545.5 191.4 543.0 190.8C540.5 190.2 537.3 189.0 535.0 188.0C532.7 187.0 531.3 186.1 529.0 184.6C526.7 183.1 523.2 180.6 521.0 179.0C518.8 177.4 516.7 175.6 515.8 174.9C515.8 175.9 515.9 179.1 515.5 181.0C515.1 182.9 513.8 185.7 513.4 186.6C512.3 186.1 508.8 184.7 507.0 183.5C505.2 182.3 504.1 181.4 502.6 179.3C501.1 177.2 499.2 173.3 498.0 171.0C496.8 168.7 496.5 167.6 495.6 165.3C494.7 163.0 493.3 159.6 492.5 157.0C491.7 154.4 490.9 151.2 490.6 150.0C490.4 151.7 490.3 156.7 489.5 160.0C488.7 163.3 487.4 167.0 486.0 170.0C484.6 173.0 482.7 175.7 481.0 178.0C479.3 180.3 477.8 181.9 476.0 184.0C474.2 186.1 471.4 189.4 470.5 190.5C470.1 189.1 468.9 184.7 468.0 182.0C467.1 179.3 465.6 175.6 465.1 174.3C464.1 176.1 461.6 181.1 459.0 185.2C456.4 189.2 452.3 193.9 449.3 198.6C446.3 203.3 442.2 210.8 440.8 213.2C440.2 211.0 438.2 203.9 437.0 200.0C435.8 196.1 434.3 192.8 433.5 190.0C432.7 187.2 432.2 184.2 432.0 183.0C431.8 181.5 430.6 177.0 430.6 174.0C430.6 171.0 431.2 168.2 431.8 165.0C432.4 161.8 433.1 158.6 434.5 155.0C435.9 151.4 438.2 146.5 440.5 143.5C442.8 140.5 445.6 138.7 448.0 137.0C450.4 135.3 454.0 133.9 455.2 133.3L443.7 128.0C445.6 127.3 451.3 125.3 455.0 124.0C458.7 122.7 462.5 121.4 465.7 120.1C468.9 118.8 471.3 117.0 474.0 116.0C476.7 115.0 479.5 114.1 482.0 114.0C484.5 113.9 487.0 114.6 489.0 115.5C491.0 116.4 493.2 118.8 494.0 119.5C493.7 118.1 492.6 113.8 492.0 111.0C491.4 108.2 490.6 104.3 490.3 103.0L493.8 101.3Z" fill="#a3875a" stroke="none" stroke-width="0" stroke-linecap="round" stroke-linejoin="round" /><path d="M487.0 133.0C486.6 135.0 485.6 141.0 484.5 145.0C483.4 149.0 482.2 153.0 480.5 157.0C478.8 161.0 475.5 167.0 474.5 169.0" fill="none" stroke="#7c6438" stroke-width="2.4" stroke-linecap="round" stroke-linejoin="round" opacity="0.9"/><path d="M462.5 155.0C461.9 156.8 460.2 162.5 459.0 166.0C457.8 169.5 456.3 173.0 455.0 176.0C453.7 179.0 451.7 182.7 451.0 184.0" fill="none" stroke="#7c6438" stroke-width="2.2" stroke-linecap="round" stroke-linejoin="round" opacity="0.9"/><path d="M444.0 141.0C443.2 142.5 440.2 146.8 439.0 150.0C437.8 153.2 436.9 158.3 436.5 160.0" fill="none" stroke="#7c6438" stroke-width="1.2" stroke-linecap="round" stroke-linejoin="round" opacity="0.8"/><path d="M445.5 160.0C445.2 161.7 444.2 167.0 444.0 170.0C443.8 173.0 444.4 176.7 444.5 178.0" fill="none" stroke="#7c6438" stroke-width="1" stroke-linecap="round" stroke-linejoin="round" opacity="0.8"/><path d="M437.0 167.0C436.8 168.5 435.9 173.0 436.0 176.0C436.1 179.0 437.2 183.5 437.5 185.0" fill="none" stroke="#7c6438" stroke-width="1.2" stroke-linecap="round" stroke-linejoin="round" opacity="0.8"/><path d="M456.0 180.0C455.0 182.0 451.8 188.2 450.0 192.0C448.2 195.8 445.8 201.2 445.0 203.0" fill="none" stroke="#7c6438" stroke-width="2.2" stroke-linecap="round" stroke-linejoin="round" opacity="0.9"/><path d="M509.6 148.0C509.0 148.7 506.6 150.0 506.0 152.0C505.4 154.0 505.4 157.6 505.8 160.0C506.2 162.4 507.8 165.4 508.2 166.5C508.7 165.9 510.2 163.3 511.0 163.0C511.8 162.7 512.7 164.2 513.0 164.5C512.4 163.2 510.1 159.8 509.5 157.0C508.9 154.2 509.6 149.5 509.6 148.0Z" fill="#7c6438" stroke="none" stroke-width="0" stroke-linecap="round" stroke-linejoin="round" /><path d="M518.4 155.3C518.8 157.1 519.6 162.6 521.0 166.0C522.4 169.4 524.5 172.9 527.0 175.5C529.5 178.1 532.7 180.1 536.0 181.5C539.3 182.9 543.3 183.8 547.0 184.0C550.7 184.2 555.2 183.3 558.0 182.5C560.8 181.7 562.6 179.6 563.5 179.0C562.2 179.1 558.4 179.3 556.0 179.5C553.6 179.7 550.2 179.9 549.0 180.0C547.2 179.6 541.5 179.2 538.0 177.5C534.5 175.8 530.7 172.6 528.0 170.0C525.3 167.4 523.6 164.4 522.0 162.0C520.4 159.6 519.0 156.4 518.4 155.3Z" fill="#7c6438" stroke="none" stroke-width="0" stroke-linecap="round" stroke-linejoin="round" /><path d="M544.5 174.5C545.8 174.3 549.3 173.5 552.0 173.5C554.7 173.5 558.6 173.8 560.5 174.5C562.4 175.2 563.0 177.4 563.5 178.0C562.2 178.5 558.6 180.8 556.0 181.0C553.4 181.2 549.9 180.6 548.0 179.5C546.1 178.4 545.1 175.3 544.5 174.5Z" fill="#735b30" stroke="none" stroke-width="0" stroke-linecap="round" stroke-linejoin="round" /><path d="M552.0 140.5C552.7 141.2 554.6 142.6 556.0 145.0C557.4 147.4 559.2 151.5 560.5 155.0C561.8 158.5 563.2 163.4 563.5 166.0C563.8 168.6 562.9 169.8 562.0 170.5C561.1 171.2 558.7 170.1 558.0 170.0C558.5 169.3 560.9 168.3 561.0 166.0C561.1 163.7 559.7 159.3 558.5 156.0C557.3 152.7 555.1 148.6 554.0 146.0C552.9 143.4 552.3 141.4 552.0 140.5" fill="none" stroke="#7c6438" stroke-width="0.8" stroke-linecap="round" stroke-linejoin="round" /><path d="M494.0 119.5C493.3 118.8 492.0 116.4 490.0 115.5C488.0 114.6 484.7 113.9 482.0 114.0C479.3 114.1 476.7 115.0 474.0 116.0C471.3 117.0 468.9 118.8 465.7 120.1C462.5 121.4 458.7 122.7 455.0 124.0C451.3 125.3 445.6 127.3 443.7 128.0L455.2 133.3C454.0 133.9 450.4 135.3 448.0 137.0C445.6 138.7 442.8 140.5 440.5 143.5C438.2 146.5 435.9 151.4 434.5 155.0C433.1 158.6 432.4 161.8 431.8 165.0C431.2 168.2 430.6 171.0 430.6 174.0C430.6 177.0 431.8 181.5 432.0 183.0" fill="none" stroke="#0b0b0b" stroke-width="2.6" stroke-linecap="round" stroke-linejoin="round" /><path d="M432.3 184.0C432.8 183.8 434.4 182.3 435.2 182.6C436.0 182.8 437.0 184.0 437.0 185.5C437.0 187.0 435.7 190.5 435.4 191.5" fill="none" stroke="#0b0b0b" stroke-width="1.82" stroke-linecap="round" stroke-linejoin="round" /><path d="M432.0 183.0C432.2 184.5 432.7 188.8 433.5 192.0C434.3 195.2 435.8 198.5 437.0 202.0C438.2 205.5 440.2 211.3 440.8 213.2" fill="none" stroke="#0b0b0b" stroke-width="2.86" stroke-linecap="round" stroke-linejoin="round" /><path d="M440.8 213.2C441.3 211.8 442.6 207.4 444.0 205.0C445.4 202.6 446.8 201.9 449.3 198.6C451.8 195.3 456.4 189.2 459.0 185.2C461.6 181.1 464.1 176.1 465.1 174.3" fill="none" stroke="#0b0b0b" stroke-width="1.95" stroke-linecap="round" stroke-linejoin="round" /><path d="M465.1 173.5C465.3 174.8 465.9 178.2 466.5 181.0C467.1 183.8 468.2 188.9 468.5 190.5" fill="none" stroke="#0b0b0b" stroke-width="3.12" stroke-linecap="round" stroke-linejoin="round" /><path d="M477.2 173.0C476.8 174.5 475.9 179.1 474.5 182.0C473.1 184.9 469.5 189.1 468.5 190.5L464.0 193.5" fill="none" stroke="#0b0b0b" stroke-width="2.86" stroke-linecap="round" stroke-linejoin="round" /><path d="M491.0 149.0C490.8 150.8 490.8 156.5 490.0 160.0C489.2 163.5 488.1 166.9 486.5 170.0C484.9 173.1 481.5 177.1 480.5 178.5" fill="none" stroke="#0b0b0b" stroke-width="1.69" stroke-linecap="round" stroke-linejoin="round" /><path d="M498.0 122.0C497.8 120.3 497.6 115.4 497.0 112.0C496.4 108.6 494.7 103.5 494.2 101.8C495.2 102.8 498.4 105.5 500.0 107.5C501.6 109.5 502.8 111.5 504.0 113.5C505.2 115.5 506.5 118.5 507.0 119.5" fill="none" stroke="#0b0b0b" stroke-width="2.6" stroke-linecap="round" stroke-linejoin="round" /><path d="M493.5 117.5C493.8 118.1 493.8 119.9 495.0 121.0C496.2 122.1 499.6 123.5 500.5 124.0L502.0 121.0" fill="none" stroke="#0b0b0b" stroke-width="2.08" stroke-linecap="round" stroke-linejoin="round" /><path d="M508.5 118.2C509.8 118.0 513.2 117.1 516.0 116.8C518.8 116.5 522.3 116.3 525.5 116.6C528.7 116.9 532.1 117.7 535.0 118.6C537.9 119.5 540.5 120.5 543.0 121.8C545.5 123.1 547.8 124.6 550.0 126.5C552.2 128.4 555.4 131.9 556.5 133.0" fill="none" stroke="#0b0b0b" stroke-width="2.86" stroke-linecap="round" stroke-linejoin="round" /><path d="M520.0 117.5C521.7 117.8 526.8 118.2 530.0 119.0C533.2 119.8 537.5 121.9 539.0 122.5" fill="none" stroke="#0b0b0b" stroke-width="1.82" stroke-linecap="round" stroke-linejoin="round" /><path d="M559.5 135.0C560.2 136.2 562.8 139.2 564.0 142.0C565.2 144.8 566.1 148.5 567.0 152.0C567.9 155.5 568.9 159.8 569.5 163.0C570.1 166.2 570.3 169.7 570.5 171.0" fill="none" stroke="#0b0b0b" stroke-width="2.6" stroke-linecap="round" stroke-linejoin="round" /><path d="M563.0 148.0C563.4 149.7 565.0 154.7 565.5 158.0C566.0 161.3 565.9 166.3 566.0 168.0" fill="none" stroke="#0b0b0b" stroke-width="1.69" stroke-linecap="round" stroke-linejoin="round" /><path d="M567.5 174.0C568.6 174.1 572.3 174.1 574.0 174.5C575.7 174.9 576.9 176.2 577.5 176.5L570.0 177.5C569.7 177.9 567.7 179.2 568.0 180.0C568.3 180.8 569.9 182.0 572.0 182.0C574.1 182.0 579.1 180.3 580.5 180.0" fill="none" stroke="#0b0b0b" stroke-width="2.6" stroke-linecap="round" stroke-linejoin="round" /><path d="M580.8 180.2C579.8 181.2 577.1 184.4 575.0 186.0C572.9 187.6 570.4 189.0 568.0 190.0C565.6 191.0 563.6 191.5 560.6 191.8C557.6 192.1 552.9 192.0 550.0 191.8C547.1 191.6 545.5 191.4 543.0 190.8C540.5 190.2 537.3 189.0 535.0 188.0C532.7 187.0 531.3 186.1 529.0 184.6C526.7 183.1 523.2 180.6 521.0 179.0C518.8 177.4 516.7 175.6 515.8 174.9C515.8 175.9 515.9 179.1 515.5 181.0C515.1 182.9 513.8 185.7 513.4 186.6C512.3 186.1 508.8 184.7 507.0 183.5C505.2 182.3 504.1 181.4 502.6 179.3C501.1 177.2 499.2 173.3 498.0 171.0C496.8 168.7 496.4 167.5 495.6 165.3C494.9 163.1 493.9 159.2 493.5 158.0" fill="none" stroke="#0b0b0b" stroke-width="2.86" stroke-linecap="round" stroke-linejoin="round" /><path d="M519.0 190.5C519.8 190.3 522.1 189.3 524.0 189.5C525.9 189.7 529.4 191.2 530.5 191.5" fill="none" stroke="#0b0b0b" stroke-width="1.82" stroke-linecap="round" stroke-linejoin="round" /><path d="M437.0 203.0C437.6 205.0 439.0 211.3 440.5 215.0C442.0 218.7 444.1 221.9 446.0 225.0C447.9 228.1 449.7 230.8 452.0 233.5C454.3 236.2 457.0 239.0 460.0 241.0C463.0 243.0 466.3 244.2 470.0 245.5C473.7 246.8 477.7 247.8 482.0 248.5C486.3 249.2 491.3 249.8 496.0 250.0C500.7 250.2 505.3 249.9 510.0 249.5C514.7 249.1 519.7 248.6 524.0 247.5C528.3 246.4 532.5 244.9 536.0 243.0C539.5 241.1 542.4 238.7 545.0 236.0C547.6 233.3 549.7 230.5 551.5 227.0C553.3 223.5 554.7 219.0 556.0 215.0C557.3 211.0 558.8 206.8 559.5 203.0C560.2 199.2 559.9 193.8 560.0 192.0" fill="none" stroke="#0b0b0b" stroke-width="3.38" stroke-linecap="round" stroke-linejoin="round" /><path d="M442.4 216.5C441.9 217.5 439.6 220.2 439.3 222.5C439.0 224.8 439.1 227.8 440.3 230.0C441.5 232.2 444.1 234.5 446.5 235.8C448.9 237.1 453.1 237.3 454.4 237.6" fill="none" stroke="#0b0b0b" stroke-width="2.73" stroke-linecap="round" stroke-linejoin="round" /><path d="M444.3 221.0C444.5 222.2 444.4 226.4 445.5 228.5C446.6 230.6 450.1 232.7 451.0 233.5" fill="none" stroke="#0b0b0b" stroke-width="1.56" stroke-linecap="round" stroke-linejoin="round" /><path d="M560.4 208.0C561.3 207.7 564.2 205.9 565.8 206.2C567.4 206.5 569.2 208.3 570.0 210.0C570.8 211.7 571.1 214.2 570.8 216.3C570.5 218.4 569.4 221.2 568.0 222.5C566.6 223.8 563.2 224.0 562.2 224.3" fill="none" stroke="#0b0b0b" stroke-width="2.34" stroke-linecap="round" stroke-linejoin="round" /><path d="M565.8 215.4C565.4 216.1 564.3 218.3 563.6 219.6C562.9 220.9 562.0 222.4 561.7 223.0" fill="none" stroke="#0b0b0b" stroke-width="1.43" stroke-linecap="round" stroke-linejoin="round" /><path d="M458.0 245.0C458.8 246.2 461.0 250.1 463.0 252.0C465.0 253.9 468.3 255.8 470.0 256.5C471.7 257.2 472.5 256.5 473.0 256.5L474.5 253.0" fill="none" stroke="#0b0b0b" stroke-width="1.95" stroke-linecap="round" stroke-linejoin="round" /><path d="M523.0 251.0C524.3 251.6 528.2 254.1 531.0 254.8C533.8 255.6 537.7 255.6 540.0 255.5C542.3 255.4 544.2 254.2 545.0 254.0L541.5 251.5L552.0 249.0L548.0 246.5L556.5 242.0L553.0 240.5L557.5 236.5" fill="none" stroke="#0b0b0b" stroke-width="1.82" stroke-linecap="round" stroke-linejoin="round" /><ellipse cx="476.6" cy="209.4" rx="6.6" ry="7.8" fill="#2c4729"/><ellipse cx="475.8" cy="208" rx="2.8" ry="4.2" fill="#2b6485" opacity="0.8" filter="url(#bl2)"/><ellipse cx="476.6" cy="209.4" rx="6.6" ry="7.8" fill="none" stroke="#10180f" stroke-width="1.3"/><circle cx="478.4" cy="204.6" r="1" fill="#dfeee0"/><circle cx="475.2" cy="212.6" r="0.7" fill="#cfe0d8"/><ellipse cx="531.4" cy="207" rx="5.6" ry="7.2" fill="#2c4729"/><ellipse cx="530.6" cy="205.8" rx="2.4" ry="3.8" fill="#2b6485" opacity="0.8" filter="url(#bl2)"/><ellipse cx="531.4" cy="207" rx="5.6" ry="7.2" fill="none" stroke="#10180f" stroke-width="1.3"/><circle cx="533" cy="202.6" r="0.9" fill="#dfeee0"/><circle cx="530" cy="210.4" r="0.7" fill="#cfe0d8"/><path d="M464.5 216.5C464.2 215.4 462.7 212.1 462.8 210.0C462.9 207.9 463.7 205.5 465.0 204.0C466.3 202.5 468.5 201.4 470.5 200.8C472.5 200.2 475.1 200.1 477.0 200.5C478.9 200.9 481.2 202.6 482.0 203.0" fill="none" stroke="#0b0b0b" stroke-width="2.86" stroke-linecap="round" stroke-linejoin="round" /><path d="M518.0 211.0C517.8 210.0 516.3 206.8 516.5 205.0C516.7 203.2 517.6 201.6 519.0 200.5C520.4 199.4 522.9 198.8 525.0 198.5C527.1 198.2 529.6 198.3 531.5 199.0C533.4 199.7 535.7 201.9 536.5 202.5" fill="none" stroke="#0b0b0b" stroke-width="2.86" stroke-linecap="round" stroke-linejoin="round" /><path d="M466.5 220.5C467.8 220.8 471.3 222.1 474.0 222.0C476.7 221.9 481.1 220.3 482.5 220.0" fill="none" stroke="#30263a" stroke-width="2.4" stroke-linecap="round" stroke-linejoin="round" opacity="0.9"/><path d="M466.0 222.5C467.3 222.8 471.5 224.0 474.0 224.0C476.5 224.0 479.8 222.8 481.0 222.5" fill="none" stroke="#8f86a8" stroke-width="1.8" stroke-linecap="round" stroke-linejoin="round" opacity="0.55"/><path d="M517.5 215.5C518.2 216.0 520.1 218.1 522.0 218.5C523.9 218.9 527.8 218.1 529.0 218.0" fill="none" stroke="#30263a" stroke-width="2.4" stroke-linecap="round" stroke-linejoin="round" opacity="0.9"/><path d="M518.0 218.0C518.8 218.4 521.2 220.2 523.0 220.5C524.8 220.8 528.0 220.1 529.0 220.0" fill="none" stroke="#8f86a8" stroke-width="1.8" stroke-linecap="round" stroke-linejoin="round" opacity="0.55"/><ellipse cx="464.8" cy="228.2" rx="8.6" ry="5" fill="#c7735c" filter="url(#bl2)" transform="rotate(-8 464.8 228.2)"/><ellipse cx="534.6" cy="221.8" rx="8.4" ry="4.6" fill="#d08c7a" filter="url(#bl2)" transform="rotate(8 534.6 221.8)"/><path d="M459.0 224.5C459.3 224.2 460.3 222.5 461.0 222.5C461.7 222.5 462.8 223.8 463.0 224.5C463.2 225.2 462.2 226.6 462.0 227.0C462.7 227.2 464.7 228.6 466.0 228.5C467.3 228.4 469.3 226.8 470.0 226.5" fill="none" stroke="#0b0b0b" stroke-width="2.08" stroke-linecap="round" stroke-linejoin="round" /><path d="M527.0 221.5C527.5 221.7 529.2 222.7 530.0 222.5C530.8 222.3 531.2 220.8 531.5 220.5C531.8 220.8 532.4 221.9 533.0 222.0C533.6 222.1 534.7 221.2 535.0 221.0" fill="none" stroke="#7a3424" stroke-width="1.3" stroke-linecap="round" stroke-linejoin="round" /><path d="M462.8 197.8C464.0 197.1 467.6 194.8 470.0 193.6C472.4 192.4 475.8 191.1 477.0 190.6L476.0 194.5C474.8 194.8 471.2 195.6 469.0 196.2C466.8 196.8 463.8 197.5 462.8 197.8Z" fill="#0b0b0b" stroke="#0b0b0b" stroke-width="1.04" stroke-linecap="round" stroke-linejoin="round" /><path d="M521.0 190.2C521.8 190.2 524.4 189.7 526.0 190.0C527.6 190.3 529.9 191.5 530.7 191.8" fill="none" stroke="#0b0b0b" stroke-width="1.95" stroke-linecap="round" stroke-linejoin="round" /><path d="M496.5 205.0C496.4 206.2 496.3 209.6 496.0 212.0C495.7 214.4 494.8 218.2 494.6 219.5C494.7 219.0 494.4 217.2 495.0 216.5C495.6 215.8 497.3 215.2 498.5 215.5C499.7 215.8 501.8 217.6 502.4 218.0" fill="none" stroke="#0b0b0b" stroke-width="2.21" stroke-linecap="round" stroke-linejoin="round" /><path d="M496.5 238.2C497.3 238.3 499.8 239.0 501.5 238.6C503.2 238.2 506.1 236.4 507.0 236.0" fill="none" stroke="#0b0b0b" stroke-width="1.82" stroke-linecap="round" stroke-linejoin="round" /><path d="M460 236.500l7 5M536 236.500l-6 5.5" fill="none" stroke="#999" stroke-width="0.9" stroke-linecap="round" stroke-linejoin="round" /></g></svg>
<svg style="left:0;top:0" width="1024" height="576" viewBox="0 0 1024 576"><defs><linearGradient id="kl" x1="0" y1="0" x2="1" y2="1"><stop offset="0" stop-color="#ff4fd8"/><stop offset="0.35" stop-color="#f78be0"/><stop offset="0.55" stop-color="#f6e27a"/><stop offset="0.8" stop-color="#48e0d4"/><stop offset="1" stop-color="#38b4ff"/></linearGradient></defs><circle cx="140.3" cy="58.4" r="4.3" fill="url(#kl)"/><circle cx="140.52" cy="58.92" r="1.94" fill="#f2fbfa"/><path d="M136.43 54.74L141.38 59.26" stroke="#1c1c24" stroke-width="1.46" stroke-linecap="round"/><path d="M140.73 58.62L142.45 60.55" stroke="#101018" stroke-width="1.29" stroke-linecap="round"/><rect x="855.4" y="53.3" width="11" height="11.2" rx="1.6" fill="#353535" stroke="#767676" stroke-width="0.7"/><path d="M858.8 56.8l4.2 4.2M863 56.8l-4.2 4.2" stroke="#f4f4f4" stroke-width="1.5"/><circle cx="720.5" cy="203.8" r="8.4" fill="none" stroke="#528a58" stroke-width="1"/><path d="M869.6 74.6l2.2-2.2 2.2 2.2z" fill="#c8c8c8"/><path d="M869.6 517.4l2.2 2.2 2.2-2.2z" fill="#c8c8c8"/><path d="M132.6 525.8l-2.2 2.2 2.2 2.2z" fill="#c8c8c8"/><path d="M862 525.8l2.2 2.2-2.2 2.2z" fill="#c8c8c8"/><path d="M125.8 287v9.4" stroke="#777" stroke-width="1.2" stroke-dasharray="1 0.5"/><path d="M878.6 287v9.4" stroke="#777" stroke-width="1.2" stroke-dasharray="1 0.5"/></svg>
<div style="left:877px;top:47.7px;width:147px;height:501px;background:#454545;"></div>
<div style="left:880.5px;top:74px;width:134px;height:91px;background:#808080;"></div>
<div style="left:948px;top:50px;width:75px;height:13.6px;background:#3c3c3c;border:0.6px solid #353535;"></div>
<div style="left:880.5px;top:48.6px;width:67.4px;height:15px;background:#454545;border:0.6px solid #555;border-bottom:none;border-radius:1.5px 1.5px 0 0;"></div>
<span style="left:889.3px;top:53.0px;font-size:6.25px;color:#cfcfcf;">Sélecteur <u>d</u>e co...</span>
<span style="left:957px;top:53.5px;font-size:6.25px;color:#cfcfcf;">S<u>é</u>lecteur de coule...</span>
<span style="left:882px;top:65.6px;font-size:6.25px;color:#cfcfcf;">Sélecteur <u>d</u>e couleurs avancé</span>
<div style="left:902.0px;top:73.8px;width:91.4px;height:91.4px;border-radius:50%;background:conic-gradient(from 270deg,#ff0000,#ffff00,#00ff00,#00ffff,#0000ff,#ff00ff,#ff0000);-webkit-mask:radial-gradient(circle closest-side,transparent 0,transparent 81.5%,#000 83%,#000 98.5%,transparent 100%);mask:radial-gradient(circle closest-side,transparent 0,transparent 81.5%,#000 83%,#000 98.5%,transparent 100%);"></div>
<svg style="left:0;top:0" width="1024" height="576" viewBox="0 0 1024 576"><defs><linearGradient id="trA" gradientUnits="userSpaceOnUse" x1="915.6" y1="138.3" x2="979.9" y2="138.3"><stop offset="0" stop-color="#ffffff"/><stop offset="1" stop-color="#0068ff"/></linearGradient><linearGradient id="trB" gradientUnits="userSpaceOnUse" x1="947.8" y1="82.3" x2="947.8" y2="138.3"><stop offset="0" stop-color="#000" stop-opacity="1"/><stop offset="1" stop-color="#000" stop-opacity="0"/></linearGradient><linearGradient id="b1" x1="0" x2="1"><stop offset="0" stop-color="#8fd8cc"/><stop offset="0.5" stop-color="#9bb4d8"/><stop offset="1" stop-color="#ab98d8"/></linearGradient><linearGradient id="b2" x1="0" x2="1"><stop offset="0" stop-color="#4e4e4e"/><stop offset="0.35" stop-color="#8f9499"/><stop offset="0.7" stop-color="#7fb2ee"/><stop offset="1" stop-color="#2f8cf5"/></linearGradient><linearGradient id="b3" x1="0" x2="1"><stop offset="0" stop-color="#061a3a"/><stop offset="0.5" stop-color="#7d9dc6"/><stop offset="0.72" stop-color="#ffffff"/><stop offset="1" stop-color="#ffffff"/></linearGradient></defs><path d="M947.8 82.3L979.9 138.3H915.6z" fill="url(#trA)"/><path d="M947.8 82.3L979.9 138.3H915.6z" fill="url(#trB)"/><circle cx="935.4" cy="126.2" r="2.6" fill="none" stroke="#3a3a3a" stroke-width="0.7"/><circle cx="935.4" cy="126.2" r="2.0" fill="none" stroke="#c8c8c8" stroke-width="0.5"/><path d="M979.6 140.2l5.4 3.6" stroke="#fff" stroke-width="1.2"/><path d="M980.2 139.2l5.4 3.6" stroke="#222" stroke-width="0.6"/><rect x="885" y="78.4" width="7.6" height="7.6" fill="none" stroke="#c4c4c4" stroke-width="0.7"/><path d="M885 80.6h7.6M887.4 80.6v5.4M888.8 82.4h2.6M888.8 84.2h2.6" stroke="#c4c4c4" stroke-width="0.6"/><rect x="1015" y="73.70" width="8.4" height="8.6" fill="#9ab8e0"/><rect x="1015" y="82.20" width="8.4" height="8.6" fill="#000000"/><rect x="1015" y="90.70" width="8.4" height="8.6" fill="#3b2e4f"/><rect x="1015" y="99.20" width="8.4" height="8.6" fill="#a68d5c"/><rect x="1015" y="107.70" width="8.4" height="8.6" fill="#3a6da6"/><rect x="1015" y="116.20" width="8.4" height="8.6" fill="#1f2e17"/><rect x="1015" y="124.70" width="8.4" height="8.6" fill="#e2e2e2"/><rect x="1015" y="133.20" width="8.4" height="8.6" fill="#2b4121"/><rect x="1015" y="141.70" width="8.4" height="8.6" fill="#7b2b2b"/><rect x="1015" y="150.20" width="8.4" height="8.6" fill="#5b4a3c"/><rect x="1015" y="158.70" width="8.4" height="8.6" fill="#3e2a0a"/><rect x="1015" y="167.20" width="8.4" height="8.6" fill="#c2615a"/><rect x="1015" y="175.70" width="8.4" height="8.6" fill="#0c1522"/><rect x="1015" y="184.20" width="8.4" height="8.6" fill="#1a2f4b"/><rect x="880.5" y="165.2" width="134.4" height="5.7" fill="url(#b1)"/><rect x="880.5" y="170.9" width="134.4" height="5.6" fill="url(#b2)"/><rect x="880.5" y="176.5" width="134.4" height="6" fill="url(#b3)"/><rect x="945.8" y="165.4" width="4.6" height="5.4" fill="none" stroke="#555" stroke-width="0.7"/><rect x="945.8" y="171.0" width="4.6" height="5.4" fill="none" stroke="#555" stroke-width="0.7"/><rect x="945.8" y="176.8" width="4.6" height="5.4" fill="none" stroke="#555" stroke-width="0.7"/><rect x="880.5" y="182.4" width="134.4" height="1.1" fill="#858585"/><path d="M883.27 191.96A3.9 3.9 0 0 1 883.59 184.53M885.93 184.64A3.9 3.9 0 0 1 885.61 192.07" fill="none" stroke="#b8b8b8" stroke-width="0.9"/><path d="M883.86 182.29l2.36 2.15l-2.36 1.93z" fill="#b8b8b8"/><path d="M885.34 194.31l-2.36 -2.15l2.36 -1.93z" fill="#b8b8b8"/><path d="M948.5 195.3h9.5" stroke="#5f5f5f" stroke-width="0.8" stroke-dasharray="1 0.6"/><path d="M948.5 417.2h9.5" stroke="#5f5f5f" stroke-width="0.8" stroke-dasharray="1 0.6"/><g stroke="#8c8c8c" stroke-width="0.6" fill="none"><rect x="1010.2" y="65.60000000000001" width="5" height="5.2" stroke-dasharray="1 0.6"/><rect x="1017.2" y="65.60000000000001" width="5.2" height="5.2" stroke-dasharray="1 0.6"/><path d="M1017.8 66.2l4 4M1021.8 66.2l-4 4"/><path d="M1011.2 68.2h3M1012.7 66.60000000000001v3.2"/></g><g stroke="#8c8c8c" stroke-width="0.6" fill="none"><rect x="1010.2" y="214.8" width="5" height="5.2" stroke-dasharray="1 0.6"/><rect x="1017.2" y="214.8" width="5.2" height="5.2" stroke-dasharray="1 0.6"/><path d="M1017.8 215.4l4 4M1021.8 215.4l-4 4"/><path d="M1011.2 217.4h3M1012.7 215.8v3.2"/></g><g stroke="#8c8c8c" stroke-width="0.6" fill="none"><rect x="1010.2" y="421.0" width="5" height="5.2" stroke-dasharray="1 0.6"/><rect x="1017.2" y="421.0" width="5.2" height="5.2" stroke-dasharray="1 0.6"/><path d="M1017.8 421.6l4 4M1021.8 421.6l-4 4"/><path d="M1011.2 423.6h3M1012.7 422.0v3.2"/></g></svg>
<div style="left:910.9px;top:199px;width:39.6px;height:12.8px;background:#3e3e3e;border:0.6px solid #373737;"></div>
<div style="left:952.6px;top:199px;width:70.6px;height:12.8px;background:#3e3e3e;border:0.6px solid #373737;"></div>
<div style="left:880.5px;top:197.6px;width:28.8px;height:14.2px;background:#454545;border:0.6px solid #555;border-bottom:none;border-radius:1.5px 1.5px 0 0;"></div>
<span style="left:888.2px;top:202.2px;font-size:6.25px;color:#cfcfcf;">Ca...</span>
<span style="left:917.9px;top:202.3px;font-size:6.25px;color:#cfcfcf;">C<u>o</u>mpo...</span>
<span style="left:959.6px;top:202.3px;font-size:6.25px;color:#cfcfcf;"><u>H</u>istorique d'annul...</span>
<span style="left:882px;top:214.5px;font-size:6.25px;color:#cfcfcf;">Ca<u>l</u>ques</span>
<div style="left:880.8px;top:223.4px;width:113.8px;height:11px;background:#414141;border:0.6px solid #393939;border-radius:1px;"></div>
<span style="left:883px;top:226.1px;font-size:6.25px;color:#cfcfcf;">Normal</span>
<div style="left:997px;top:223.4px;width:26.4px;height:11px;background:#444;border:0.6px solid #3b3b3b;border-radius:1px;"></div>
<div style="left:880.5px;top:236.2px;width:116.6px;height:14.6px;background:#4f769a;"></div>
<span style="left:916.8px;top:240.6px;font-size:6.4px;color:#e6e6e6;">Opacité:   100%</span>
<div style="left:997.1px;top:236.2px;width:9px;height:14.6px;background:#3d3d3d;"></div>
<div style="left:1008.5px;top:236.6px;width:14.6px;height:14px;background:#474747;border:0.6px solid #3d3d3d;border-radius:1px;"></div>
<div style="left:880.5px;top:250.8px;width:133.6px;height:147.2px;background:#3b3b3b;overflow:hidden;"></div>
<div style="left:1014.1px;top:250.8px;width:9.3px;height:147.2px;background:#3d3d3d;"></div>
<div style="left:1014.4px;top:252.4px;width:8.8px;height:8.4px;background:#484848;border:0.5px solid #555;"></div>
<div style="left:1014.4px;top:389px;width:8.8px;height:8.6px;background:#484848;border:0.5px solid #555;"></div>
<div style="left:1014.4px;top:284px;width:8.8px;height:36.5px;background:#4a4a4a;"></div>
<svg style="left:0;top:0" width="1024" height="576" viewBox="0 0 1024 576"><defs><clipPath id="lc"><rect x="880.5" y="250.8" width="133.6" height="147.2"/></clipPath></defs><g clip-path="url(#lc)"><path d="M883 255.50c1.6-2.6 5.8-2.6 7.4 0M883 257.70c1.6 2.6 5.8 2.6 7.4 0" stroke="#6a6a6a" stroke-width="0.7" fill="none"/><rect x="897" y="251.30" width="6" height="10.4" fill="#868378"/><rect x="898.4" y="253.10" width="3.2" height="2.6" fill="#7d7466" opacity="0.8"/><rect x="898.6" y="256.90" width="2.8" height="3" fill="#6b7684" opacity="0.8"/><path d="M909.6 252.30h3.2c1.4 0.4 1.2 3.2-0.6 4.6h-2.6M909.6 252.30l1.6 1.4-1.4 1" stroke="#7b7b7b" stroke-width="0.7" fill="none"/><rect x="985.2" y="256.30" width="4.4" height="3.4" fill="#8a8a8a"/><path d="M986.4 256.30v-1.3a1.2 1.2 0 0 1 2.2-0.4" stroke="#8a8a8a" stroke-width="0.7" fill="none"/><path d="M1001 253.50c-1.4 2-2.4 5.6-4.6 5.6-1.4 0-2.2-1.2-2.2-2.8s0.8-2.8 2.2-2.8c2.2 0 3 3.4 4.6 5.6" stroke="#8a8a8a" stroke-width="0.8" fill="none"/><rect x="1004.6" y="252.60" width="2.6" height="2.6" fill="#7d7d7d"/><rect x="1004.6" y="255.20" width="2.6" height="2.6" fill="#555555"/><rect x="1004.6" y="257.80" width="2.6" height="2.6" fill="#7d7d7d"/><rect x="1007.2" y="252.60" width="2.6" height="2.6" fill="#555555"/><rect x="1007.2" y="255.20" width="2.6" height="2.6" fill="#7d7d7d"/><rect x="1007.2" y="257.80" width="2.6" height="2.6" fill="#555555"/><rect x="1009.8" y="252.60" width="2.6" height="2.6" fill="#7d7d7d"/><rect x="1009.8" y="255.20" width="2.6" height="2.6" fill="#555555"/><rect x="1009.8" y="257.80" width="2.6" height="2.6" fill="#7d7d7d"/><path d="M883 269.85c1.6-2.6 5.8-2.6 7.4 0M883 272.05c1.6 2.6 5.8 2.6 7.4 0" stroke="#6a6a6a" stroke-width="0.7" fill="none"/><rect x="897" y="265.65" width="6" height="10.4" fill="#888082"/><rect x="898.4" y="267.45" width="3.2" height="2.6" fill="#7d7466" opacity="0.8"/><rect x="898.6" y="271.25" width="2.8" height="3" fill="#6b7684" opacity="0.8"/><path d="M909.6 266.65h3.2c1.4 0.4 1.2 3.2-0.6 4.6h-2.6M909.6 266.65l1.6 1.4-1.4 1" stroke="#7b7b7b" stroke-width="0.7" fill="none"/><rect x="985.2" y="270.65" width="4.4" height="3.4" fill="#8a8a8a"/><path d="M986.4 270.65v-1.3a1.2 1.2 0 0 1 2.2-0.4" stroke="#8a8a8a" stroke-width="0.7" fill="none"/><path d="M1001 267.85c-1.4 2-2.4 5.6-4.6 5.6-1.4 0-2.2-1.2-2.2-2.8s0.8-2.8 2.2-2.8c2.2 0 3 3.4 4.6 5.6" stroke="#8a8a8a" stroke-width="0.8" fill="none"/><rect x="1004.6" y="266.95" width="2.6" height="2.6" fill="#7d7d7d"/><rect x="1004.6" y="269.55" width="2.6" height="2.6" fill="#555555"/><rect x="1004.6" y="272.15" width="2.6" height="2.6" fill="#7d7d7d"/><rect x="1007.2" y="266.95" width="2.6" height="2.6" fill="#555555"/><rect x="1007.2" y="269.55" width="2.6" height="2.6" fill="#7d7d7d"/><rect x="1007.2" y="272.15" width="2.6" height="2.6" fill="#555555"/><rect x="1009.8" y="266.95" width="2.6" height="2.6" fill="#7d7d7d"/><rect x="1009.8" y="269.55" width="2.6" height="2.6" fill="#555555"/><rect x="1009.8" y="272.15" width="2.6" height="2.6" fill="#7d7d7d"/><path d="M883 284.20c1.6-2.6 5.8-2.6 7.4 0M883 286.40c1.6 2.6 5.8 2.6 7.4 0" stroke="#6a6a6a" stroke-width="0.7" fill="none"/><rect x="897" y="280.00" width="6" height="10.4" fill="#8c8a7c"/><rect x="898.4" y="281.80" width="3.2" height="2.6" fill="#7d7466" opacity="0.8"/><rect x="898.6" y="285.60" width="2.8" height="3" fill="#6b7684" opacity="0.8"/><path d="M909.6 281.00h3.2c1.4 0.4 1.2 3.2-0.6 4.6h-2.6M909.6 281.00l1.6 1.4-1.4 1" stroke="#7b7b7b" stroke-width="0.7" fill="none"/><rect x="985.2" y="285.00" width="4.4" height="3.4" fill="#8a8a8a"/><path d="M986.4 285.00v-1.3a1.2 1.2 0 0 1 2.2-0.4" stroke="#8a8a8a" stroke-width="0.7" fill="none"/><path d="M1001 282.20c-1.4 2-2.4 5.6-4.6 5.6-1.4 0-2.2-1.2-2.2-2.8s0.8-2.8 2.2-2.8c2.2 0 3 3.4 4.6 5.6" stroke="#8a8a8a" stroke-width="0.8" fill="none"/><rect x="1004.6" y="281.30" width="2.6" height="2.6" fill="#7d7d7d"/><rect x="1004.6" y="283.90" width="2.6" height="2.6" fill="#555555"/><rect x="1004.6" y="286.50" width="2.6" height="2.6" fill="#7d7d7d"/><rect x="1007.2" y="281.30" width="2.6" height="2.6" fill="#555555"/><rect x="1007.2" y="283.90" width="2.6" height="2.6" fill="#7d7d7d"/><rect x="1007.2" y="286.50" width="2.6" height="2.6" fill="#555555"/><rect x="1009.8" y="281.30" width="2.6" height="2.6" fill="#7d7d7d"/><rect x="1009.8" y="283.90" width="2.6" height="2.6" fill="#555555"/><rect x="1009.8" y="286.50" width="2.6" height="2.6" fill="#7d7d7d"/><path d="M883 298.55c1.6-2.6 5.8-2.6 7.4 0M883 300.75c1.6 2.6 5.8 2.6 7.4 0" stroke="#6a6a6a" stroke-width="0.7" fill="none"/><rect x="897" y="294.35" width="6" height="10.4" fill="#6f786f"/><rect x="898.4" y="296.15" width="3.2" height="2.6" fill="#7d7466" opacity="0.8"/><rect x="898.6" y="299.95" width="2.8" height="3" fill="#6b7684" opacity="0.8"/><path d="M909.6 295.35h3.2c1.4 0.4 1.2 3.2-0.6 4.6h-2.6M909.6 295.35l1.6 1.4-1.4 1" stroke="#7b7b7b" stroke-width="0.7" fill="none"/><rect x="985.2" y="299.35" width="4.4" height="3.4" fill="#8a8a8a"/><path d="M986.4 299.35v-1.3a1.2 1.2 0 0 1 2.2-0.4" stroke="#8a8a8a" stroke-width="0.7" fill="none"/><path d="M1001 296.55c-1.4 2-2.4 5.6-4.6 5.6-1.4 0-2.2-1.2-2.2-2.8s0.8-2.8 2.2-2.8c2.2 0 3 3.4 4.6 5.6" stroke="#8a8a8a" stroke-width="0.8" fill="none"/><rect x="1004.6" y="295.65" width="2.6" height="2.6" fill="#7d7d7d"/><rect x="1004.6" y="298.25" width="2.6" height="2.6" fill="#555555"/><rect x="1004.6" y="300.85" width="2.6" height="2.6" fill="#7d7d7d"/><rect x="1007.2" y="295.65" width="2.6" height="2.6" fill="#555555"/><rect x="1007.2" y="298.25" width="2.6" height="2.6" fill="#7d7d7d"/><rect x="1007.2" y="300.85" width="2.6" height="2.6" fill="#555555"/><rect x="1009.8" y="295.65" width="2.6" height="2.6" fill="#7d7d7d"/><rect x="1009.8" y="298.25" width="2.6" height="2.6" fill="#555555"/><rect x="1009.8" y="300.85" width="2.6" height="2.6" fill="#7d7d7d"/><path d="M882.8 313.90c1.6-3 6.2-3 7.8 0-1.6 3-6.2 3-7.8 0z" fill="#e6e6e6"/><circle cx="886.7" cy="314.10" r="1.5" fill="#3b3b3b"/><path d="M883 312.50c1.6-2.2 5.8-2.2 7.4 0" stroke="#e6e6e6" stroke-width="0.8" fill="none"/><rect x="897" y="308.70" width="6" height="10.4" fill="#f4f4f4"/><path d="M898.4 310.30h3M899 312.90h2M898.6 315.30h2.6M899 317.30h2" stroke="#222" stroke-width="0.8"/><path d="M909.6 309.70h3.2c1.4 0.4 1.2 3.2-0.6 4.6h-2.6M909.6 309.70l1.6 1.4-1.4 1" stroke="#e0e0e0" stroke-width="0.7" fill="none"/><rect x="985.2" y="313.70" width="4.4" height="3.4" fill="#8a8a8a"/><path d="M986.4 313.70v-1.3a1.2 1.2 0 0 1 2.2-0.4" stroke="#8a8a8a" stroke-width="0.7" fill="none"/><path d="M1001 310.90c-1.4 2-2.4 5.6-4.6 5.6-1.4 0-2.2-1.2-2.2-2.8s0.8-2.8 2.2-2.8c2.2 0 3 3.4 4.6 5.6" stroke="#8a8a8a" stroke-width="0.8" fill="none"/><rect x="1004.6" y="310.00" width="2.6" height="2.6" fill="#7d7d7d"/><rect x="1004.6" y="312.60" width="2.6" height="2.6" fill="#555555"/><rect x="1004.6" y="315.20" width="2.6" height="2.6" fill="#7d7d7d"/><rect x="1007.2" y="310.00" width="2.6" height="2.6" fill="#555555"/><rect x="1007.2" y="312.60" width="2.6" height="2.6" fill="#7d7d7d"/><rect x="1007.2" y="315.20" width="2.6" height="2.6" fill="#555555"/><rect x="1009.8" y="310.00" width="2.6" height="2.6" fill="#7d7d7d"/><rect x="1009.8" y="312.60" width="2.6" height="2.6" fill="#555555"/><rect x="1009.8" y="315.20" width="2.6" height="2.6" fill="#7d7d7d"/><rect x="893.2" y="321.05" width="120.9" height="13.5" fill="#517a9f"/><path d="M907.4 321.05v13.5" stroke="#46698a" stroke-width="0.6"/><path d="M915.6 321.05v13.5" stroke="#46698a" stroke-width="0.6"/><path d="M983.5 321.05v13.5" stroke="#46698a" stroke-width="0.6"/><path d="M993.4 321.05v13.5" stroke="#46698a" stroke-width="0.6"/><path d="M1003.5 321.05v13.5" stroke="#46698a" stroke-width="0.6"/><path d="M882.8 328.25c1.6-3 6.2-3 7.8 0-1.6 3-6.2 3-7.8 0z" fill="#e6e6e6"/><circle cx="886.7" cy="328.45" r="1.5" fill="#3b3b3b"/><path d="M883 326.85c1.6-2.2 5.8-2.2 7.4 0" stroke="#e6e6e6" stroke-width="0.8" fill="none"/><rect x="897" y="323.05" width="6" height="10.4" fill="#fff"/><rect x="898.6" y="324.45" width="2.8" height="2.4" fill="#b48a4a"/><rect x="898.8" y="327.65" width="2.4" height="2.4" fill="#7a9ccc"/><rect x="898.8" y="330.05" width="2.4" height="2.6" fill="#14264a"/><path d="M909.6 324.05h3.2c1.4 0.4 1.2 3.2-0.6 4.6h-2.6M909.6 324.05l1.6 1.4-1.4 1" stroke="#e0e0e0" stroke-width="0.7" fill="none"/><rect x="985.2" y="328.05" width="4.4" height="3.4" fill="#8aa3bd"/><path d="M986.4 328.05v-1.3a1.2 1.2 0 0 1 2.2-0.4" stroke="#8aa3bd" stroke-width="0.7" fill="none"/><path d="M1001 325.25c-1.4 2-2.4 5.6-4.6 5.6-1.4 0-2.2-1.2-2.2-2.8s0.8-2.8 2.2-2.8c2.2 0 3 3.4 4.6 5.6" stroke="#8aa3bd" stroke-width="0.8" fill="none"/><rect x="1004.6" y="324.35" width="2.6" height="2.6" fill="#9db6cf"/><rect x="1004.6" y="326.95" width="2.6" height="2.6" fill="#6d8fb0"/><rect x="1004.6" y="329.55" width="2.6" height="2.6" fill="#9db6cf"/><rect x="1007.2" y="324.35" width="2.6" height="2.6" fill="#6d8fb0"/><rect x="1007.2" y="326.95" width="2.6" height="2.6" fill="#9db6cf"/><rect x="1007.2" y="329.55" width="2.6" height="2.6" fill="#6d8fb0"/><rect x="1009.8" y="324.35" width="2.6" height="2.6" fill="#9db6cf"/><rect x="1009.8" y="326.95" width="2.6" height="2.6" fill="#6d8fb0"/><rect x="1009.8" y="329.55" width="2.6" height="2.6" fill="#9db6cf"/><path d="M883 341.60c1.6-2.6 5.8-2.6 7.4 0M883 343.80c1.6 2.6 5.8 2.6 7.4 0" stroke="#6a6a6a" stroke-width="0.7" fill="none"/><rect x="897" y="337.40" width="6" height="10.4" fill="#7b7b7b"/><rect x="898.4" y="339.20" width="3.2" height="2.6" fill="#7d7466" opacity="0.8"/><rect x="898.6" y="343.00" width="2.8" height="3" fill="#6b7684" opacity="0.8"/><path d="M909.6 338.40h3.2c1.4 0.4 1.2 3.2-0.6 4.6h-2.6M909.6 338.40l1.6 1.4-1.4 1" stroke="#7b7b7b" stroke-width="0.7" fill="none"/><rect x="985.2" y="342.40" width="4.4" height="3.4" fill="#8a8a8a"/><path d="M986.4 342.40v-1.3a1.2 1.2 0 0 1 2.2-0.4" stroke="#8a8a8a" stroke-width="0.7" fill="none"/><path d="M1001 339.60c-1.4 2-2.4 5.6-4.6 5.6-1.4 0-2.2-1.2-2.2-2.8s0.8-2.8 2.2-2.8c2.2 0 3 3.4 4.6 5.6" stroke="#8a8a8a" stroke-width="0.8" fill="none"/><rect x="1004.6" y="338.70" width="2.6" height="2.6" fill="#7d7d7d"/><rect x="1004.6" y="341.30" width="2.6" height="2.6" fill="#555555"/><rect x="1004.6" y="343.90" width="2.6" height="2.6" fill="#7d7d7d"/><rect x="1007.2" y="338.70" width="2.6" height="2.6" fill="#555555"/><rect x="1007.2" y="341.30" width="2.6" height="2.6" fill="#7d7d7d"/><rect x="1007.2" y="343.90" width="2.6" height="2.6" fill="#555555"/><rect x="1009.8" y="338.70" width="2.6" height="2.6" fill="#7d7d7d"/><rect x="1009.8" y="341.30" width="2.6" height="2.6" fill="#555555"/><rect x="1009.8" y="343.90" width="2.6" height="2.6" fill="#7d7d7d"/><path d="M883 355.95c1.6-2.6 5.8-2.6 7.4 0M883 358.15c1.6 2.6 5.8 2.6 7.4 0" stroke="#6a6a6a" stroke-width="0.7" fill="none"/><rect x="897" y="351.75" width="6" height="10.4" fill="#7a7a7a"/><rect x="898.4" y="353.55" width="3.2" height="2.6" fill="#7d7466" opacity="0.8"/><rect x="898.6" y="357.35" width="2.8" height="3" fill="#6b7684" opacity="0.8"/><path d="M909.6 352.75h3.2c1.4 0.4 1.2 3.2-0.6 4.6h-2.6M909.6 352.75l1.6 1.4-1.4 1" stroke="#7b7b7b" stroke-width="0.7" fill="none"/><rect x="985.2" y="356.75" width="4.4" height="3.4" fill="#8a8a8a"/><path d="M986.4 356.75v-1.3a1.2 1.2 0 0 1 2.2-0.4" stroke="#8a8a8a" stroke-width="0.7" fill="none"/><path d="M1001 353.95c-1.4 2-2.4 5.6-4.6 5.6-1.4 0-2.2-1.2-2.2-2.8s0.8-2.8 2.2-2.8c2.2 0 3 3.4 4.6 5.6" stroke="#8a8a8a" stroke-width="0.8" fill="none"/><rect x="1004.6" y="353.05" width="2.6" height="2.6" fill="#7d7d7d"/><rect x="1004.6" y="355.65" width="2.6" height="2.6" fill="#555555"/><rect x="1004.6" y="358.25" width="2.6" height="2.6" fill="#7d7d7d"/><rect x="1007.2" y="353.05" width="2.6" height="2.6" fill="#555555"/><rect x="1007.2" y="355.65" width="2.6" height="2.6" fill="#7d7d7d"/><rect x="1007.2" y="358.25" width="2.6" height="2.6" fill="#555555"/><rect x="1009.8" y="353.05" width="2.6" height="2.6" fill="#7d7d7d"/><rect x="1009.8" y="355.65" width="2.6" height="2.6" fill="#555555"/><rect x="1009.8" y="358.25" width="2.6" height="2.6" fill="#7d7d7d"/><path d="M883 370.30c1.6-2.6 5.8-2.6 7.4 0M883 372.50c1.6 2.6 5.8 2.6 7.4 0" stroke="#6a6a6a" stroke-width="0.7" fill="none"/><rect x="897" y="366.10" width="6" height="10.4" fill="#908c80"/><rect x="898.4" y="367.90" width="3.2" height="2.6" fill="#7d7466" opacity="0.8"/><rect x="898.6" y="371.70" width="2.8" height="3" fill="#6b7684" opacity="0.8"/><path d="M909.6 367.10h3.2c1.4 0.4 1.2 3.2-0.6 4.6h-2.6M909.6 367.10l1.6 1.4-1.4 1" stroke="#7b7b7b" stroke-width="0.7" fill="none"/><rect x="985.2" y="371.10" width="4.4" height="3.4" fill="#8a8a8a"/><path d="M986.4 371.10v-1.3a1.2 1.2 0 0 1 2.2-0.4" stroke="#8a8a8a" stroke-width="0.7" fill="none"/><path d="M1001 368.30c-1.4 2-2.4 5.6-4.6 5.6-1.4 0-2.2-1.2-2.2-2.8s0.8-2.8 2.2-2.8c2.2 0 3 3.4 4.6 5.6" stroke="#8a8a8a" stroke-width="0.8" fill="none"/><rect x="1004.6" y="367.40" width="2.6" height="2.6" fill="#7d7d7d"/><rect x="1004.6" y="370.00" width="2.6" height="2.6" fill="#555555"/><rect x="1004.6" y="372.60" width="2.6" height="2.6" fill="#7d7d7d"/><rect x="1007.2" y="367.40" width="2.6" height="2.6" fill="#555555"/><rect x="1007.2" y="370.00" width="2.6" height="2.6" fill="#7d7d7d"/><rect x="1007.2" y="372.60" width="2.6" height="2.6" fill="#555555"/><rect x="1009.8" y="367.40" width="2.6" height="2.6" fill="#7d7d7d"/><rect x="1009.8" y="370.00" width="2.6" height="2.6" fill="#555555"/><rect x="1009.8" y="372.60" width="2.6" height="2.6" fill="#7d7d7d"/><path d="M883 384.65c1.6-2.6 5.8-2.6 7.4 0M883 386.85c1.6 2.6 5.8 2.6 7.4 0" stroke="#6a6a6a" stroke-width="0.7" fill="none"/><rect x="897" y="380.45" width="6" height="10.4" fill="#878787"/><rect x="898.4" y="382.25" width="3.2" height="2.6" fill="#7d7466" opacity="0.8"/><rect x="898.6" y="386.05" width="2.8" height="3" fill="#6b7684" opacity="0.8"/><path d="M909.6 381.45h3.2c1.4 0.4 1.2 3.2-0.6 4.6h-2.6M909.6 381.45l1.6 1.4-1.4 1" stroke="#7b7b7b" stroke-width="0.7" fill="none"/><rect x="985.2" y="385.45" width="4.4" height="3.4" fill="#8a8a8a"/><path d="M986.4 385.45v-1.3a1.2 1.2 0 0 1 2.2-0.4" stroke="#8a8a8a" stroke-width="0.7" fill="none"/><path d="M1001 382.65c-1.4 2-2.4 5.6-4.6 5.6-1.4 0-2.2-1.2-2.2-2.8s0.8-2.8 2.2-2.8c2.2 0 3 3.4 4.6 5.6" stroke="#8a8a8a" stroke-width="0.8" fill="none"/><rect x="1004.6" y="381.75" width="2.6" height="2.6" fill="#7d7d7d"/><rect x="1004.6" y="384.35" width="2.6" height="2.6" fill="#555555"/><rect x="1004.6" y="386.95" width="2.6" height="2.6" fill="#7d7d7d"/><rect x="1007.2" y="381.75" width="2.6" height="2.6" fill="#555555"/><rect x="1007.2" y="384.35" width="2.6" height="2.6" fill="#7d7d7d"/><rect x="1007.2" y="386.95" width="2.6" height="2.6" fill="#555555"/><rect x="1009.8" y="381.75" width="2.6" height="2.6" fill="#7d7d7d"/><rect x="1009.8" y="384.35" width="2.6" height="2.6" fill="#555555"/><rect x="1009.8" y="386.95" width="2.6" height="2.6" fill="#7d7d7d"/><path d="M883 399.00c1.6-2.6 5.8-2.6 7.4 0M883 401.20c1.6 2.6 5.8 2.6 7.4 0" stroke="#6a6a6a" stroke-width="0.7" fill="none"/><rect x="897" y="394.80" width="6" height="10.4" fill="#827e72"/><rect x="898.4" y="396.60" width="3.2" height="2.6" fill="#7d7466" opacity="0.8"/><rect x="898.6" y="400.40" width="2.8" height="3" fill="#6b7684" opacity="0.8"/><path d="M909.6 395.80h3.2c1.4 0.4 1.2 3.2-0.6 4.6h-2.6M909.6 395.80l1.6 1.4-1.4 1" stroke="#7b7b7b" stroke-width="0.7" fill="none"/><rect x="985.2" y="399.80" width="4.4" height="3.4" fill="#8a8a8a"/><path d="M986.4 399.80v-1.3a1.2 1.2 0 0 1 2.2-0.4" stroke="#8a8a8a" stroke-width="0.7" fill="none"/><path d="M1001 397.00c-1.4 2-2.4 5.6-4.6 5.6-1.4 0-2.2-1.2-2.2-2.8s0.8-2.8 2.2-2.8c2.2 0 3 3.4 4.6 5.6" stroke="#8a8a8a" stroke-width="0.8" fill="none"/><rect x="1004.6" y="396.10" width="2.6" height="2.6" fill="#7d7d7d"/><rect x="1004.6" y="398.70" width="2.6" height="2.6" fill="#555555"/><rect x="1004.6" y="401.30" width="2.6" height="2.6" fill="#7d7d7d"/><rect x="1007.2" y="396.10" width="2.6" height="2.6" fill="#555555"/><rect x="1007.2" y="398.70" width="2.6" height="2.6" fill="#7d7d7d"/><rect x="1007.2" y="401.30" width="2.6" height="2.6" fill="#555555"/><rect x="1009.8" y="396.10" width="2.6" height="2.6" fill="#7d7d7d"/><rect x="1009.8" y="398.70" width="2.6" height="2.6" fill="#555555"/><rect x="1009.8" y="401.30" width="2.6" height="2.6" fill="#7d7d7d"/></g><path d="M1016.6 257.8l2.2-2.2 2.2 2.2z" fill="#cfcfcf"/><path d="M1016.6 392.2l2.2 2.2 2.2-2.2z" fill="#cfcfcf"/><path d="M985.4 228.2h4.2l-2.1 2.1z" fill="#b4b4b4"/><path d="M1001.6 226h6l-2.2 2.8v3l-1.6 0.8v-3.8z" fill="none" stroke="#d0d0d0" stroke-width="0.7"/><path d="M1013.2 228.2h4l-2 2z" fill="#b4b4b4"/><path d="M999.8 241.6l1.9-1.9 1.9 1.9z" fill="#6f6f6f"/><path d="M999.8 246l1.9 1.9 1.9-1.9z" fill="#d0d0d0"/><rect x="1011.4" y="239.6" width="8.4" height="7.6" fill="none" stroke="#d8d8d8" stroke-width="0.9"/><path d="M1011.4 241.6h8.4M1013.6 241.6v5.6M1015 243.6h3.4M1015 245.4h3.4" stroke="#d8d8d8" stroke-width="0.7"/><path d="M1019 247.6h2.6l-1.3 1.2z" fill="#d8d8d8"/><rect x="883.6" y="402.2" width="8.4" height="8.4" fill="none" stroke="#e2e2e2" stroke-width="1"/><path d="M885.6 406.4h4.4M887.8 404.2v4.4" stroke="#e2e2e2" stroke-width="1.4"/><path d="M897.6 405.4h4l-2 2z" fill="#9a9a9a"/><rect x="910.6" y="402.2" width="6" height="6" fill="#9a9a9a" stroke="#e2e2e2" stroke-width="0.8"/><path d="M908.4 404.6v6h6" fill="none" stroke="#e2e2e2" stroke-width="0.9"/><path d="M925.4 404.6l4.2 3.8 4.2-3.8" fill="none" stroke="#e2e2e2" stroke-width="1"/><path d="M942.3 408.4l4.2-3.8 4.2 3.8" fill="none" stroke="#e2e2e2" stroke-width="1"/><path d="M959.4 403.6h8.6M959.4 406.4h8.6M959.4 409.2h8.6" stroke="#e2e2e2" stroke-width="0.8"/><path d="M965.4 402.6v2M961.6 405.4v2M965.4 408.2v2" stroke="#e2e2e2" stroke-width="1.2"/><path d="M1012.2 404.4h6.4l-0.5 6.2h-5.4z" fill="#e2e2e2"/><path d="M1011.6 403.4h7.6M1014 402.4h2.8" stroke="#e2e2e2" stroke-width="1"/><path d="M882 449.4h140.4" stroke="#8c8c8c" stroke-width="0.8"/></svg>
<span style="left:924.6px;top:253.2px;font-size:6.1px;color:#969696;clip-path:inset(0.0px 0 0 0);">Calque de dess...</span>
<span style="left:924.6px;top:267.55px;font-size:6.1px;color:#969696;clip-path:inset(0.0px 0 0 0);">Calque de dess...</span>
<span style="left:924.6px;top:281.9px;font-size:6.1px;color:#969696;clip-path:inset(0.0px 0 0 0);">Calque de dess...</span>
<span style="left:924.6px;top:296.25px;font-size:6.1px;color:#969696;clip-path:inset(0.0px 0 0 0);">Calque de dess...</span>
<span style="left:924.6px;top:310.59999999999997px;font-size:6.1px;color:#e0e0e0;">Calque de dess...</span>
<span style="left:925.4px;top:324.75px;font-size:6.7px;color:#e8e8e8;font-weight:bold;">Calque de de...</span>
<span style="left:924.6px;top:339.3px;font-size:6.1px;color:#969696;clip-path:inset(0.0px 0 0 0);">Calque de dess...</span>
<span style="left:924.6px;top:353.65px;font-size:6.1px;color:#969696;clip-path:inset(0.0px 0 0 0);">Calque de dess...</span>
<span style="left:924.6px;top:368.0px;font-size:6.1px;color:#969696;clip-path:inset(0.0px 0 0 0);">Calque de dess...</span>
<span style="left:924.6px;top:382.34999999999997px;font-size:6.1px;color:#969696;clip-path:inset(0.0px 0 0 0);">Calque de dess...</span>
<span style="left:882px;top:420.6px;font-size:6.25px;color:#cfcfcf;"><u>P</u>références d'outils</span>
<span style="left:882px;top:436.9px;font-size:6.25px;color:#cfcfcf;">Lissage de la brosse :</span>
<div style="left:956.2px;top:434px;width:64.6px;height:11px;background:#424242;border:0.6px solid #393939;border-radius:1px;"></div>
<span style="left:958.6px;top:436.9px;font-size:6.25px;color:#cfcfcf;">Basique</span>
<svg style="left:0;top:0" width="1024" height="576" viewBox="0 0 1024 576"><path d="M1011.4 438.6h4.4l-2.2 2.2z" fill="#b4b4b4"/></svg>
<div style="left:882px;top:454px;width:9px;height:9px;background:#3a3a3a;"></div>
<span style="left:894.5px;top:455.4px;font-size:6.25px;color:#cfcfcf;">Assistants aimantés</span>
<div style="left:0px;top:532.5px;width:1024px;height:16.3px;background:#454545;"></div>
<div style="left:4px;top:536.8px;width:8px;height:9px;background:transparent;border:0.7px solid #7a7a7a;border-radius:1.5px;"></div>
<div style="left:5.8px;top:538.8px;width:4.4px;height:4.8px;background:transparent;border:0.6px solid #6c6c6c;border-radius:50%;"></div>
<span style="left:20px;top:539.0px;font-size:6.6px;color:#c8c8c8;">b) Basic-5 Size</span>
<span style="left:226.3px;top:538.9px;font-size:6.85px;color:#c8c8c8;">RGB/Alpha (Entier sur 8 bits / canal) sRGB-elle-V2-srgbtrc.icc</span>
<div style="left:657px;top:535px;width:83.4px;height:12.4px;background:#4c4c4c;border:0.6px solid #3c3c3c;border-left:1px solid #4f86bd;"></div>
<span style="left:659.2px;top:538.7px;font-size:6.95px;color:#c8c8c8;">1 016 <u>x</u> 1 576 (132,6 Mio)</span>
<div style="left:802px;top:535.8px;width:11px;height:11px;background:#262626;border-radius:50%;"></div>
<span style="left:830px;top:538.8px;font-size:6.6px;color:#c8c8c8;">0,00°</span>
<span style="left:940.6px;top:538.4px;font-size:7.3px;color:#c8c8c8;">50 %</span>
<div style="left:966.8px;top:540.8px;width:36.4px;height:1.4px;background:#333;"></div>
<div style="left:966.8px;top:540.6px;width:5.4px;height:1.8px;background:#4f86bd;"></div>
<div style="left:972.2px;top:537.6px;width:6.8px;height:7.8px;background:#555;border:0.6px solid #3a3a3a;border-radius:1px;"></div>
<div style="left:1013.4px;top:537.6px;width:7px;height:7.8px;background:#d4d9c4;border:0.8px solid #5a9ad0;"></div>
<div style="left:0px;top:548.8px;width:1024px;height:27.2px;background:#e7dde2;"></div>
<div style="left:32.5px;top:548.8px;width:190.9px;height:27.2px;background:#ffffff;"></div>
<div style="left:258.1px;top:548.8px;width:32.4px;height:27.2px;background:#fbb07f;"></div>
<div style="left:258.1px;top:574.2px;width:32.4px;height:1.8px;background:#f26100;"></div>
<div style="left:423.6px;top:548.8px;width:32.4px;height:27.2px;background:#fbb07f;"></div>
<div style="left:423.6px;top:574.2px;width:32.4px;height:1.8px;background:#f26100;"></div>
<div style="left:489.8px;top:548.8px;width:32.4px;height:27.2px;background:#f2ebef;"></div>
<div style="left:393px;top:574.3px;width:27px;height:1.7px;background:#0a6cc9;"></div>
<div style="left:459px;top:574.3px;width:27.2px;height:1.7px;background:#0a6cc9;"></div>
<div style="left:489.8px;top:574.3px;width:32.4px;height:1.7px;background:#0a6cc9;"></div>
<div style="left:525.3px;top:574.3px;width:27px;height:1.7px;background:#0a6cc9;"></div>
<div style="left:415.4px;top:574.3px;width:4.6px;height:1.7px;background:#6aa7e0;"></div>
<span style="left:58.8px;top:558.1px;font-size:10.25px;color:#2a2a2a;">Taper ici pour</span>
<span style="left:723px;top:558.3px;font-size:9.4px;color:#1a1a1a;">8°C  Ciel couvert</span>
<span style="left:922.9px;top:552.6px;font-size:8.7px;color:#1a1a1a;transform:scaleX(0.84);transform-origin:0 0;">23:49</span>
<span style="left:911.9px;top:564.6px;font-size:8.7px;color:#1a1a1a;transform:scaleX(0.93);transform-origin:0 0;">07/12/2024</span>
<div style="left:1020.4px;top:548.8px;width:0.6px;height:27.2px;background:#d6cbd1;"></div>
<svg style="left:0;top:0" width="1024" height="576" viewBox="0 0 1024 576"><path d="M10.6 559.2l4.6-0.7v4.3h-4.6zM15.8 558.4l5.8-0.9v5.3h-5.8zM10.6 563.4h4.6v4.3l-4.6-0.7zM15.8 563.4h5.8v5.3l-5.8-0.9z" fill="#111"/><circle cx="48" cy="560.6" r="3.3" fill="none" stroke="#222" stroke-width="0.9"/><path d="M45.6 563l-4.6 4.8" stroke="#222" stroke-width="1"/><path d="M177.6 566.4h45.8v9.6h-51.6v-3.2z" fill="#e2bb8c"/><path d="M171.8 572.8h51.6v3.2h-51.6z" fill="#cfa678"/><path d="M179.4 561l15.6-5 3 10.2-15.8 5z" fill="#4caf50"/><path d="M180.6 560.6l7-2.4 2.6 9.2-7 2.4z" fill="#f1f1f1"/><path d="M188 558.2l6.4-2.2 2.6 9.2-6.4 2.2z" fill="#e4e4e4"/><path d="M182 563l4.4-1.4M182.6 565l4.4-1.4M189.6 560.6l4-1.4M190.2 562.6l4-1.4" stroke="#bdbdbd" stroke-width="0.5"/><path d="M192.4 562.4l4.6-6.8 1.8 1.2-4.6 6.8-2.2 1z" fill="#f5a623"/><path d="M197 555.6l0.9-1.3 1.8 1.2-0.9 1.3z" fill="#e94f4f"/><path d="M207.4 554.2c0-3.4 5.2-3.4 5.2 0" fill="none" stroke="#1a6ef0" stroke-width="1.2"/><rect x="203.8" y="554.2" width="12.4" height="17.4" rx="4" fill="#1a6ff2"/><path d="M205 566c0-4.4 10-4.4 10 0v3.6c0 1.2-0.8 1.8-1.8 1.8h-6.4c-1 0-1.8-0.6-1.8-1.8z" fill="#4a90f8"/><path d="M205.4 569.8h9.2" stroke="#7a5af0" stroke-width="0.8"/><g fill="none" stroke="#222" stroke-width="0.9"><rect x="236.2" y="558.6" width="5.4" height="7"/><path d="M234.6 556.4h2.6M240.6 556.4h2.6M234.6 567.8h2.6M240.6 567.8h2.6M236.2 556.4v2.2M241.6 556.4v2.2M236.2 565.6v2.2M241.6 565.6v2.2M244.6 556.6v4.6M244.6 563v4.6"/></g><defs><radialGradient id="ff" cx="0.65" cy="0.2" r="0.95"><stop offset="0" stop-color="#fff36b"/><stop offset="0.35" stop-color="#ff9a1f"/><stop offset="0.7" stop-color="#ff3b47"/><stop offset="1" stop-color="#e31587"/></radialGradient></defs><circle cx="274" cy="563" r="7.6" fill="url(#ff)"/><path d="M277.2 554.6c2.6 1.6 4.4 4.4 4.4 7.6l-2.6-2.4z" fill="#ffbd2e"/><circle cx="274.6" cy="562.6" r="3.7" fill="#7542e5"/><path d="M268.6 560.2c1.6-1.4 4.8-0.6 5.4 1.2 0.8 2.4 3.4 2.2 4.2 0.6 0.2 3.6-2.6 5.6-5.4 5.2-2.6-0.4-4.8-3-4.2-7z" fill="#ff6a2b"/><defs><linearGradient id="ed" x1="0" y1="0" x2="1" y2="1"><stop offset="0" stop-color="#35c1f1"/><stop offset="0.5" stop-color="#1b9de2"/><stop offset="1" stop-color="#0c59a4"/></linearGradient><linearGradient id="ed2" x1="0" y1="0" x2="1" y2="0"><stop offset="0" stop-color="#34c1f0"/><stop offset="1" stop-color="#7ad94a"/></linearGradient></defs><circle cx="307.2" cy="562.4" r="7.7" fill="url(#ed)"/><path d="M299.6 561.6c0.6-4.4 4-7 7.8-7 4.4 0 7.6 3.2 7.6 6.8 0 2.4-1.8 3.8-3.6 3.8-1.6 0-2.6-0.8-2.6-2 0-1.6-1.8-3.6-4.4-3.6-2.2 0-4 0.8-4.8 2z" fill="url(#ed2)"/><circle cx="308" cy="561.8" r="1.6" fill="#e8f2fa"/><rect x="299.4" y="564.6" width="7.4" height="5.4" rx="0.6" fill="#c47a16"/><path d="M301.8 564.6v-1h2.6v1" stroke="#8a5a12" stroke-width="0.7" fill="none"/><path d="M299.4 567h7.4" stroke="#8a5a12" stroke-width="0.6"/><path d="M332.2 560.6l8.1-5.4 8.1 5.4v9h-16.2z" fill="#1276c8"/><path d="M332.2 560.6l8.1 5.2 8.1-5.2v9h-16.2z" fill="#28a8ea"/><path d="M334 560.4h12.6l-6.3 4.2z" fill="#fff"/><path d="M332.2 569.6l8.1-5.6 8.1 5.6z" fill="#35c1f1"/><path d="M365.8 557h5.4l1.2 1.4h8.2v9.8h-14.8z" fill="#f5b823"/><path d="M365.8 559.4h14.8v8.8h-14.8z" fill="#ffd75a"/><path d="M368.4 564h9.6v4.6h-9.6z" fill="#2f8fe0"/><path d="M370.6 566h5.2v2.6h-5.2z" fill="#ffd75a"/><ellipse cx="406.3" cy="562.4" rx="7.6" ry="7.8" fill="none" stroke="#ea3350" stroke-width="1.3"/><ellipse cx="406.3" cy="562.4" rx="3.9" ry="6.2" fill="none" stroke="#ea3350" stroke-width="1.1"/><circle cx="439" cy="561.6" r="7.6" fill="#5765f2"/><path d="M434.8 564.8c-0.4-2.4 0.2-4.6 1.2-6.2 1-0.5 1.8-0.7 2.4-0.7l0.3 0.7h0.8l0.3-0.7c0.8 0 1.6 0.2 2.4 0.7 1.1 1.7 1.6 3.7 1.2 6.2-0.9 0.6-1.8 1-2.5 1.1l-0.5-0.9c-0.9 0.3-2 0.3-2.9 0l-0.5 0.9c-0.8-0.1-1.6-0.5-2.5-1.1z" fill="#fff"/><ellipse cx="437.6" cy="562.4" rx="0.9" ry="1.1" fill="#5765f2"/><ellipse cx="440.5" cy="562.4" rx="0.9" ry="1.1" fill="#5765f2"/><circle cx="443.6" cy="566.2" r="4.5" fill="#e03a3a"/><circle cx="477.6" cy="558.4" r="1.9" fill="#5059c9"/><circle cx="472.6" cy="557.8" r="2.5" fill="#7b83eb"/><path d="M474.4 561h5.8v4.6c0 2.2-2 3.2-3.4 3.2s-2.4-1-2.4-2.6z" fill="#5059c9"/><path d="M467 561h9.2v5c0 2.400-2.2 3.600-4.400 3.600s-4.800-1.200-4.800-3.600z" fill="#7b83eb"/><rect x="464.4" y="559" width="7.8" height="7.8" rx="0.8" fill="#4b53bc"/><path d="M466.4 561.200h3.800M468.3 561.200v4" stroke="#fff" stroke-width="1"/><defs><linearGradient id="kl2" x1="0" y1="0" x2="1" y2="1"><stop offset="0" stop-color="#ff4fd8"/><stop offset="0.35" stop-color="#f78be0"/><stop offset="0.55" stop-color="#f6e27a"/><stop offset="0.8" stop-color="#48e0d4"/><stop offset="1" stop-color="#38b4ff"/></linearGradient></defs><circle cx="505.6" cy="562.8" r="6.8" fill="url(#kl2)"/><circle cx="505.94" cy="563.62" r="3.06" fill="#f2fbfa"/><path d="M499.48 557.02L507.30 564.16" stroke="#1c1c24" stroke-width="2.31" stroke-linecap="round"/><path d="M506.28 563.14L509.00 566.20" stroke="#101018" stroke-width="2.04" stroke-linecap="round"/><rect x="534.400" y="555.400" width="11.600" height="14.400" rx="0.800" fill="#2b7cd3"/><path d="M534.400 559h11.600v3.600h-11.600z" fill="#1e6dc6"/><path d="M534.400 562.600h11.600v3.600h-11.600z" fill="#185abd"/><path d="M534.400 566.200h11.600v2.800a0.800 0.800 0 0 1-0.800 0.800h-10.800z" fill="#103f91"/><rect x="530.400" y="558.400" width="8.400" height="8.400" rx="0.800" fill="#185abd"/><path d="M532 560.600l1.100 4 1.300-4 1.300 4 1.100-4" stroke="#fff" stroke-width="0.900" fill="none"/><circle cx="706.600" cy="560.800" r="3.800" fill="#ffb32e"/><path d="M703 568.600a3.200 3.200 0 0 1 0.800-6.200 4.400 4.400 0 0 1 8.200 0.600 2.900 2.900 0 0 1 0.400 5.600z" fill="#b8c8e4"/><path d="M703 568.600h9.400" stroke="#8fa6cf" stroke-width="0.800"/><circle cx="713.600" cy="556.400" r="3.200" fill="#d93025"/><path d="M801.400 559.800l2.800 2.800-2.800 2.800z" fill="#1a73e8"/><g fill="none" stroke="#222" stroke-width="0.800"><rect x="812.600" y="560" width="3.800" height="7.600" rx="0.800"/><rect x="813.400" y="557" width="2.200" height="3"/></g><path d="M830.200 556.800l4.600 1.400v3.600c0 3-2 5-4.600 6.200-2.600-1.200-4.600-3.200-4.600-6.200v-3.600z" fill="none" stroke="#222" stroke-width="0.800"/><path d="M830.200 556.800v11.200M825.600 562h9.200" stroke="#222" stroke-width="0.600"/><path d="M833.400 564l2.600 4.400h-5.200z" fill="#f4b400"/><g fill="none" stroke="#222" stroke-width="0.800"><rect x="843.800" y="558.800" width="5.400" height="7.200" rx="0.800"/><path d="M849.200 561l2.400-1.400v5.600l-2.400-1.400M843 557.400h7"/></g><g fill="none" stroke="#222" stroke-width="0.800"><rect x="858" y="557.600" width="10" height="8" rx="0.600"/><circle cx="863" cy="560.800" r="1.200"/><path d="M860.600 564.400c0.800-1.600 4-1.600 4.800 0"/></g><circle cx="867.200" cy="566.200" r="2.200" fill="#1a73e8"/><path d="M874.400 560.800h1.800l2.400-2.200v8l-2.400-2.200h-1.800z" fill="none" stroke="#222" stroke-width="0.800"/><path d="M880.200 560.400c0.800 1.200 0.800 3 0 4.200M881.800 559c1.600 2 1.600 5 0 7" fill="none" stroke="#222" stroke-width="0.700"/><g fill="none" stroke="#222" stroke-width="1"><path d="M895.600 563.800l-1.400 1.400a2 2 0 0 0 2.800 2.800l2-2a2 2 0 0 0 0-2.800M899 561.200l1.400-1.400a2 2 0 0 0-2.800-2.800l-2 2a2 2 0 0 0 0 2.800"/></g><rect x="966.800" y="557.800" width="11" height="8.800" rx="1.400" fill="#111"/><path d="M969.400 562.200c0-1.800 2.200-1.800 2.900 0s2.900 1.800 2.900 0-2.200-1.800-2.900 0-2.900 1.800-2.900 0z" fill="none" stroke="#fff" stroke-width="0.700"/><path d="M968.600 568h7.400" stroke="#111" stroke-width="0.700"/><path d="M997 557.800h9.600v8h-3.400l-1.400 1.600-1.400-1.600h-3.400z" fill="none" stroke="#222" stroke-width="0.900"/><path d="M804.400 541.400h6M808.600 539.600l1.800 1.800-1.800 1.800" stroke="#e8e8e8" stroke-width="0.800" fill="none"/><circle cx="804.600" cy="541.400" r="0.900" fill="#e8e8e8"/></svg>
<span style="left:440.8px;top:563.2px;font-size:5.6px;color:#fff;font-weight:bold;">9+</span>
<span style="left:712.4px;top:554.2px;font-size:4.6px;color:#fff;font-weight:bold;">1</span>
</body></html>
